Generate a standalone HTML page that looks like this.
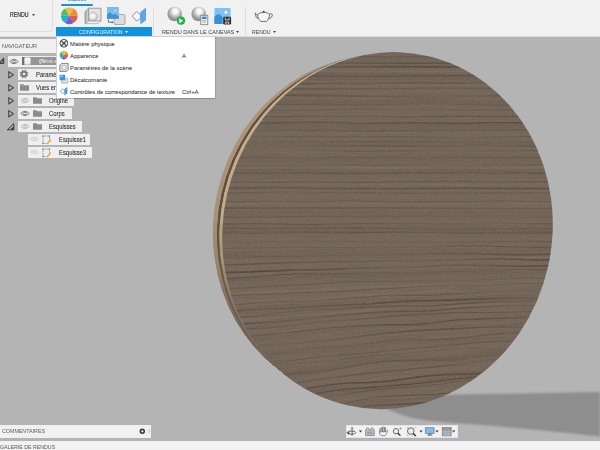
<!DOCTYPE html>
<html><head><meta charset="utf-8">
<style>
*{margin:0;padding:0;box-sizing:border-box}
html,body{width:600px;height:450px;overflow:hidden;background:#b4b4b4;font-family:"Liberation Sans",sans-serif;position:relative}
.a{position:absolute}
.t{position:absolute;white-space:nowrap;font-size:5.9px;line-height:1;color:#333;-webkit-text-stroke:.05px #333}
.u{position:absolute;white-space:nowrap;font-size:6px;line-height:1;color:#4a4a4a;transform-origin:0 0}
.row{position:absolute;background:#efefef;height:11px}
.n{position:absolute;white-space:nowrap;font-size:7px;line-height:1;color:#2c2c2c;-webkit-text-stroke:.08px currentColor;transform-origin:0 0;transform:scaleX(.84)}
</style></head><body>
<svg class="a" style="left:0;top:0" width="600" height="450" viewBox="0 0 600 450">
<defs><clipPath id="fc"><ellipse cx="387.50" cy="230.68" rx="164.50" ry="179.17" transform="rotate(12.88 387.50 230.68)" fill="#000" /></clipPath>
<clipPath id="rc"><path d="M390 40 L200 40 L200 430 L390 430 Z"/></clipPath>
<linearGradient id="rmv" x1="0" y1="290" x2="0" y2="362" gradientUnits="userSpaceOnUse"><stop offset="0" stop-color="#fff"/><stop offset="1" stop-color="#fff" stop-opacity="0"/></linearGradient>
<mask id="rm2" maskUnits="userSpaceOnUse" x="200" y="40" width="200" height="380"><rect x="200" y="40" width="200" height="380" fill="url(#rmv)"/></mask>
<linearGradient id="rmg" x1="290" y1="0" x2="375" y2="0" gradientUnits="userSpaceOnUse"><stop offset="0" stop-color="#fff"/><stop offset="1" stop-color="#fff" stop-opacity="0"/></linearGradient>
<mask id="rm" maskUnits="userSpaceOnUse" x="200" y="40" width="200" height="380"><rect x="200" y="40" width="200" height="380" fill="url(#rmg)"/></mask>
<linearGradient id="rb1" x1="0" y1="60" x2="0" y2="400" gradientUnits="userSpaceOnUse"><stop offset="0" stop-color="#8f7b64"/><stop offset=".15" stop-color="#ad9676"/><stop offset=".56" stop-color="#a99274"/><stop offset=".7" stop-color="#98846b"/><stop offset=".82" stop-color="#7c6c5b"/><stop offset="1" stop-color="#6f6253"/></linearGradient>
<linearGradient id="rb2" x1="0" y1="60" x2="0" y2="400" gradientUnits="userSpaceOnUse"><stop offset="0" stop-color="#5b4f43"/><stop offset=".53" stop-color="#5b4f43"/><stop offset=".72" stop-color="#65574a"/><stop offset="1" stop-color="#6b5e50"/></linearGradient>
<linearGradient id="rb3" x1="0" y1="60" x2="0" y2="400" gradientUnits="userSpaceOnUse"><stop offset="0" stop-color="#c9b28d"/><stop offset=".56" stop-color="#c2aa86"/><stop offset=".7" stop-color="#a89276"/><stop offset=".82" stop-color="#857464"/><stop offset="1" stop-color="#75685a"/></linearGradient>
<linearGradient id="rmg" x1="290" y1="0" x2="375" y2="0" gradientUnits="userSpaceOnUse"><stop offset="0" stop-color="#fff"/><stop offset="1" stop-color="#fff" stop-opacity="0"/></linearGradient>
<mask id="rm" maskUnits="userSpaceOnUse" x="200" y="40" width="200" height="380"><rect x="200" y="40" width="200" height="380" fill="url(#rmg)"/></mask>
<linearGradient id="rb1" x1="0" y1="60" x2="0" y2="400" gradientUnits="userSpaceOnUse"><stop offset="0" stop-color="#8f7b64"/><stop offset=".15" stop-color="#ad9676"/><stop offset=".47" stop-color="#b89f7d"/><stop offset=".64" stop-color="#9e8a70"/><stop offset=".82" stop-color="#85735f"/><stop offset="1" stop-color="#85735f"/></linearGradient>
<linearGradient id="rb2" x1="0" y1="60" x2="0" y2="400" gradientUnits="userSpaceOnUse"><stop offset="0" stop-color="#5b4f43"/><stop offset=".53" stop-color="#5b4f43"/><stop offset=".76" stop-color="#6e5e4d"/><stop offset="1" stop-color="#76654f"/></linearGradient>
<linearGradient id="rb3" x1="0" y1="60" x2="0" y2="400" gradientUnits="userSpaceOnUse"><stop offset="0" stop-color="#cfb893"/><stop offset=".6" stop-color="#c8b08c"/><stop offset=".76" stop-color="#b09878"/><stop offset=".9" stop-color="#9a8569"/><stop offset="1" stop-color="#9a8569"/></linearGradient>
<filter id="blur1" x="-10%" y="-50%" width="120%" height="200%"><feGaussianBlur stdDeviation="0.8"/></filter>
<filter id="gm" x="200" y="40" width="380" height="380" filterUnits="userSpaceOnUse" color-interpolation-filters="sRGB">
  <feTurbulence type="fractalNoise" baseFrequency="0.006 0.03" numOctaves="2" seed="9" result="n"/>
  <feColorMatrix in="n" type="matrix" values="0 0 0 0 0  0 0 0 0 0  0 0 0 0 0  1.6 0 0 0 -0.25" result="m"/>
  <feComposite in="SourceGraphic" in2="m" operator="in" result="l"/>
  <feGaussianBlur in="l" stdDeviation="0.6"/>
</filter>
<filter id="soft" x="200" y="40" width="380" height="380" filterUnits="userSpaceOnUse" color-interpolation-filters="sRGB">
  <feTurbulence type="fractalNoise" baseFrequency="0.0025 0.07" numOctaves="2" seed="21" result="n"/>
  <feColorMatrix in="n" type="matrix" values="0 0 0 0 0.29  0 0 0 0 0.24  0 0 0 0 0.19  -1.6 0 0 0 0.95" result="m"/>
  <feComposite in="m" in2="SourceAlpha" operator="in"/>
</filter>
<filter id="gm2" x="200" y="40" width="380" height="380" filterUnits="userSpaceOnUse" color-interpolation-filters="sRGB">
  <feTurbulence type="fractalNoise" baseFrequency="0.02 0.05" numOctaves="2" seed="4" result="n"/>
  <feColorMatrix in="n" type="matrix" values="0 0 0 0 0  0 0 0 0 0  0 0 0 0 0  2.2 0 0 0 -0.62" result="m"/>
  <feComposite in="SourceGraphic" in2="m" operator="in" result="l"/>
  <feGaussianBlur in="l" stdDeviation="0.35"/>
</filter>
<filter id="bblur" x="200" y="40" width="380" height="380" filterUnits="userSpaceOnUse"><feGaussianBlur stdDeviation="1.8"/></filter>
<filter id="spk" x="200" y="40" width="380" height="380" filterUnits="userSpaceOnUse" color-interpolation-filters="sRGB">
  <feTurbulence type="fractalNoise" baseFrequency="0.7" numOctaves="1" seed="2" result="s"/>
  <feColorMatrix in="s" type="matrix" values="0 0 0 0 0.62  0 0 0 0 0.56  0 0 0 0 0.5  0.9 0 0 0 -0.42" result="sp"/>
  <feComposite in="sp" in2="SourceAlpha" operator="in"/>
</filter></defs>
<path d="M384 408.5 C 400 399, 425 395.5, 455 394.6 L600 392 L600 436.5 C 560 432, 500 426, 435 421.5 C 420 420, 408 417.5, 398 413.5 C 392 411, 388 409.5, 384 408.5 Z" fill="#8e8e8e" filter="url(#blur1)"/>
<g clip-path="url(#rc)" mask="url(#rm)"><ellipse cx="371.38" cy="226.68" rx="157.76" ry="171.82" transform="rotate(12.88 371.38 226.68)" fill="url(#rb1)" /><ellipse cx="371.83" cy="226.79" rx="157.94" ry="172.03" transform="rotate(12.88 371.83 226.79)" fill="url(#rb1)" /><ellipse cx="372.28" cy="226.90" rx="158.13" ry="172.23" transform="rotate(12.88 372.28 226.90)" fill="url(#rb1)" /><ellipse cx="372.73" cy="227.01" rx="158.32" ry="172.44" transform="rotate(12.88 372.73 227.01)" fill="url(#rb1)" /><ellipse cx="373.17" cy="227.12" rx="158.50" ry="172.64" transform="rotate(12.88 373.17 227.12)" fill="url(#rb1)" /><ellipse cx="373.62" cy="227.23" rx="158.69" ry="172.84" transform="rotate(12.88 373.62 227.23)" fill="url(#rb1)" /><ellipse cx="374.07" cy="227.34" rx="158.88" ry="173.05" transform="rotate(12.88 374.07 227.34)" fill="url(#rb1)" /><ellipse cx="374.52" cy="227.46" rx="159.07" ry="173.25" transform="rotate(12.88 374.52 227.46)" fill="url(#rb1)" /><ellipse cx="374.96" cy="227.57" rx="159.25" ry="173.46" transform="rotate(12.88 374.96 227.57)" fill="url(#rb1)" /><ellipse cx="375.41" cy="227.68" rx="159.44" ry="173.66" transform="rotate(12.88 375.41 227.68)" fill="url(#rb1)" /><ellipse cx="375.86" cy="227.79" rx="159.63" ry="173.86" transform="rotate(12.88 375.86 227.79)" fill="url(#rb1)" /><ellipse cx="376.31" cy="227.90" rx="159.82" ry="174.07" transform="rotate(12.88 376.31 227.90)" fill="url(#rb1)" /><ellipse cx="376.75" cy="228.01" rx="160.00" ry="174.27" transform="rotate(12.88 376.75 228.01)" fill="url(#rb1)" /><ellipse cx="377.20" cy="228.12" rx="160.19" ry="174.48" transform="rotate(12.88 377.20 228.12)" fill="url(#rb1)" /><ellipse cx="377.65" cy="228.23" rx="160.38" ry="174.68" transform="rotate(12.88 377.65 228.23)" fill="url(#rb1)" /><ellipse cx="378.10" cy="228.35" rx="160.57" ry="174.88" transform="rotate(12.88 378.10 228.35)" fill="url(#rb1)" /><ellipse cx="378.55" cy="228.46" rx="160.75" ry="175.09" transform="rotate(12.88 378.55 228.46)" fill="url(#rb2)" /><ellipse cx="378.99" cy="228.57" rx="160.94" ry="175.29" transform="rotate(12.88 378.99 228.57)" fill="url(#rb2)" /><ellipse cx="379.44" cy="228.68" rx="161.13" ry="175.50" transform="rotate(12.88 379.44 228.68)" fill="url(#rb2)" /><ellipse cx="379.89" cy="228.79" rx="161.32" ry="175.70" transform="rotate(12.88 379.89 228.79)" fill="url(#rb2)" /><ellipse cx="380.34" cy="228.90" rx="161.50" ry="175.91" transform="rotate(12.88 380.34 228.90)" fill="url(#rb2)" /><ellipse cx="380.78" cy="229.01" rx="161.69" ry="176.11" transform="rotate(12.88 380.78 229.01)" fill="url(#rb2)" /><ellipse cx="381.23" cy="229.12" rx="161.88" ry="176.31" transform="rotate(12.88 381.23 229.12)" fill="url(#rb2)" /><ellipse cx="381.68" cy="229.23" rx="162.06" ry="176.52" transform="rotate(12.88 381.68 229.23)" fill="url(#rb2)" /><ellipse cx="382.13" cy="229.35" rx="162.25" ry="176.72" transform="rotate(12.88 382.13 229.35)" fill="url(#rb2)" /><ellipse cx="382.58" cy="229.46" rx="162.44" ry="176.93" transform="rotate(12.88 382.58 229.46)" fill="url(#rb3)" /><ellipse cx="383.02" cy="229.57" rx="162.63" ry="177.13" transform="rotate(12.88 383.02 229.57)" fill="url(#rb3)" /><ellipse cx="383.47" cy="229.68" rx="162.81" ry="177.33" transform="rotate(12.88 383.47 229.68)" fill="url(#rb3)" /><ellipse cx="383.92" cy="229.79" rx="163.00" ry="177.54" transform="rotate(12.88 383.92 229.79)" fill="url(#rb3)" /><ellipse cx="384.37" cy="229.90" rx="163.19" ry="177.74" transform="rotate(12.88 384.37 229.90)" fill="url(#rb3)" /><ellipse cx="384.81" cy="230.01" rx="163.38" ry="177.95" transform="rotate(12.88 384.81 230.01)" fill="url(#rb3)" /><ellipse cx="385.26" cy="230.12" rx="163.56" ry="178.15" transform="rotate(12.88 385.26 230.12)" fill="url(#rb3)" /><ellipse cx="385.71" cy="230.24" rx="163.75" ry="178.35" transform="rotate(12.88 385.71 230.24)" fill="url(#rb3)" /><ellipse cx="386.16" cy="230.35" rx="163.94" ry="178.56" transform="rotate(12.88 386.16 230.35)" fill="url(#rb3)" /><ellipse cx="386.60" cy="230.46" rx="164.13" ry="178.76" transform="rotate(12.88 386.60 230.46)" fill="url(#rb3)" /><ellipse cx="387.05" cy="230.57" rx="164.31" ry="178.97" transform="rotate(12.88 387.05 230.57)" fill="url(#rb3)" /></g>
<ellipse cx="387.50" cy="230.68" rx="164.50" ry="179.17" transform="rotate(12.88 387.50 230.68)" fill="#726559" />
<g clip-path="url(#fc)"><g filter="url(#gm)" stroke="#8d7f70" fill="none"><path d="M200 62.9L220 62.7L240 62.5L260 62.7L280 62.6L300 62.7L320 62.5L340 62.3L360 62.3L380 62.8L400 63.0L420 62.7L440 62.4L460 62.5L480 62.1L500 62.0L520 62.4L540 62.9L560 63.0L580 63.1" stroke-width="2.55" stroke-opacity="0.23"/><path d="M200 71.3L220 71.1L240 70.9L260 70.9L280 71.5L300 71.8L320 71.6L340 71.7L360 72.1L380 71.9L400 71.6L420 71.7L440 71.6L460 71.7L480 71.7L500 71.7L520 71.5L540 71.4L560 71.7L580 71.7" stroke-width="2.39" stroke-opacity="0.32"/><path d="M200 85.0L220 85.0L240 85.3L260 85.3L280 85.7L300 85.8L320 85.2L340 84.8L360 84.6L380 84.7L400 85.2L420 85.3L440 85.3L460 85.2L480 84.8L500 84.7L520 85.3L540 85.4L560 85.4L580 85.3" stroke-width="2.48" stroke-opacity="0.16"/><path d="M200 97.1L220 96.8L240 96.7L260 96.8L280 97.0L300 97.4L320 97.4L340 97.3L360 97.6L380 97.7L400 97.2L420 97.0L440 96.9L460 96.6L480 96.7L500 96.8L520 97.2L540 97.3L560 97.3L580 97.0" stroke-width="1.86" stroke-opacity="0.22"/><path d="M200 115.3L220 115.1L240 115.0L260 114.9L280 115.1L300 115.9L320 115.6L340 115.0L360 115.2L380 115.1L400 114.8L420 115.1L440 115.5L460 115.6L480 115.6L500 115.3L520 115.4L540 115.6L560 115.6L580 115.5" stroke-width="2.03" stroke-opacity="0.18"/><path d="M200 133.1L220 133.2L240 133.3L260 133.6L280 133.8L300 133.8L320 133.3L340 133.3L360 133.6L380 133.2L400 132.6L420 133.1L440 133.3L460 133.1L480 133.0L500 133.2L520 133.7L540 133.7L560 133.6L580 133.8" stroke-width="1.67" stroke-opacity="0.18"/><path d="M200 148.6L220 148.1L240 147.9L260 148.2L280 148.5L300 148.2L320 147.9L340 147.9L360 148.1L380 148.3L400 148.7L420 149.0L440 148.8L460 148.5L480 148.2L500 148.1L520 148.4L540 148.6L560 148.5L580 148.3" stroke-width="2.08" stroke-opacity="0.23"/><path d="M200 167.9L220 167.6L240 167.9L260 167.6L280 167.3L300 167.3L320 167.1L340 167.1L360 167.5L380 167.7L400 167.3L420 167.5L440 167.7L460 168.0L480 167.9L500 167.9L520 167.9L540 167.4L560 167.2L580 167.0" stroke-width="2.87" stroke-opacity="0.31"/><path d="M200 184.6L220 184.2L240 184.0L260 183.6L280 183.9L300 184.3L320 184.2L340 184.5L360 184.6L380 184.6L400 184.3L420 184.1L440 184.5L460 184.8L480 184.5L500 184.6L520 184.4L540 184.5L560 184.9L580 184.6" stroke-width="2.31" stroke-opacity="0.35"/><path d="M200 204.3L220 203.8L240 203.3L260 203.3L280 203.5L300 203.7L320 203.9L340 203.6L360 203.0L380 203.3L400 203.6L420 203.9L440 203.4L460 203.1L480 203.3L500 203.4L520 203.2L540 203.6L560 203.7L580 203.8" stroke-width="2.85" stroke-opacity="0.28"/><path d="M200 216.6L220 216.3L240 217.0L260 217.5L280 217.4L300 217.3L320 217.1L340 217.0L360 217.1L380 217.1L400 217.1L420 217.1L440 217.0L460 217.1L480 217.3L500 217.4L520 217.3L540 217.3L560 217.0L580 216.5" stroke-width="2.59" stroke-opacity="0.26"/><path d="M200 228.7L220 228.9L240 229.0L260 228.8L280 228.6L300 228.6L320 228.6L340 228.7L360 229.1L380 229.7L400 229.4L420 229.0L440 229.1L460 229.2L480 229.4L500 229.3L520 229.0L540 229.3L560 228.9L580 228.7" stroke-width="1.86" stroke-opacity="0.22"/><path d="M200 249.4L220 249.1L240 248.4L260 247.5L280 247.3L300 247.2L320 247.4L340 247.1L360 247.2L380 247.0L400 246.9L420 247.1L440 246.8L460 246.6L480 247.0L500 246.6L520 246.3L540 246.6L560 246.3L580 246.5" stroke-width="1.92" stroke-opacity="0.24"/><path d="M200 261.7L220 261.7L240 261.5L260 261.3L280 261.4L300 260.5L320 260.4L340 260.2L360 259.8L380 258.9L400 258.3L420 258.1L440 258.2L460 258.4L480 258.1L500 257.0L520 257.4L540 257.3L560 256.9L580 256.5" stroke-width="2.82" stroke-opacity="0.18"/><path d="M200 279.6L220 277.9L240 276.3L260 276.3L280 276.5L300 275.1L320 274.0L340 273.7L360 273.3L380 272.2L400 272.8L420 272.4L440 271.7L460 271.3L480 271.4L500 270.4L520 270.2L540 269.6L560 268.8L580 269.1" stroke-width="2.05" stroke-opacity="0.21"/><path d="M200 296.9L220 295.1L240 293.7L260 292.1L280 291.4L300 290.5L320 289.9L340 288.4L360 287.5L380 286.6L400 286.4L420 285.7L440 284.8L460 285.1L480 284.0L500 282.5L520 281.8L540 281.1L560 280.9L580 281.3" stroke-width="2.94" stroke-opacity="0.24"/><path d="M200 305.4L220 304.4L240 302.8L260 301.1L280 300.4L300 299.7L320 298.6L340 296.8L360 295.3L380 295.3L400 294.5L420 292.1L440 290.5L460 291.3L480 292.1L500 291.3L520 290.0L540 290.3L560 289.5L580 289.7" stroke-width="2.38" stroke-opacity="0.31"/><path d="M200 323.7L220 321.0L240 320.1L260 318.8L280 317.2L300 315.1L320 313.8L340 313.2L360 310.7L380 308.7L400 306.6L420 306.4L440 305.9L460 305.4L480 305.2L500 304.1L520 303.8L540 302.9L560 301.7L580 300.8" stroke-width="2.99" stroke-opacity="0.26"/><path d="M200 345.4L220 343.9L240 342.4L260 341.6L280 339.2L300 337.5L320 334.9L340 331.8L360 329.2L380 328.7L400 328.2L420 326.8L440 325.7L460 324.1L480 322.3L500 322.0L520 321.1L540 321.2L560 321.1L580 318.8" stroke-width="1.80" stroke-opacity="0.29"/><path d="M200 361.5L220 358.9L240 356.4L260 355.4L280 352.2L300 350.4L320 349.2L340 347.6L360 344.9L380 343.2L400 340.5L420 339.0L440 337.5L460 336.1L480 336.1L500 336.5L520 335.8L540 333.8L560 331.9L580 331.5" stroke-width="2.04" stroke-opacity="0.31"/><path d="M200 386.3L220 382.3L240 376.7L260 373.0L280 370.9L300 367.4L320 364.5L340 364.5L360 362.8L380 360.7L400 358.6L420 357.1L440 355.1L460 353.8L480 353.0L500 350.3L520 349.2L540 348.0L560 348.8L580 347.4" stroke-width="1.59" stroke-opacity="0.32"/><path d="M200 406.9L220 403.9L240 398.7L260 394.6L280 392.3L300 388.8L320 386.7L340 384.7L360 382.4L380 378.6L400 376.3L420 375.5L440 373.5L460 370.1L480 369.1L500 369.0L520 368.8L540 370.1L560 368.9L580 367.8" stroke-width="1.54" stroke-opacity="0.17"/><path d="M200 425.2L220 419.7L240 415.8L260 413.4L280 409.7L300 407.1L320 403.6L340 401.2L360 398.3L380 397.3L400 397.7L420 395.8L440 391.5L460 388.6L480 386.5L500 387.3L520 387.2L540 384.3L560 383.2L580 383.7" stroke-width="2.02" stroke-opacity="0.32"/><path d="M200 430.8L220 427.2L240 423.0L260 419.4L280 416.4L300 414.8L320 413.7L340 411.1L360 406.2L380 404.8L400 402.7L420 400.6L440 399.5L460 398.4L480 396.8L500 396.5L520 397.2L540 394.9L560 392.9L580 391.6" stroke-width="2.08" stroke-opacity="0.16"/><path d="M200 452.7L220 448.7L240 442.5L260 438.6L280 436.5L300 433.2L320 432.1L340 429.4L360 425.4L380 424.6L400 423.6L420 420.5L440 417.6L460 416.1L480 415.0L500 413.0L520 412.5L540 411.1L560 409.5L580 409.0" stroke-width="2.83" stroke-opacity="0.25"/></g><g filter="url(#bblur)" stroke="#4b3e32" fill="none"><path d="M200 62.5L220 63.0L240 63.7L260 62.3L280 61.8L300 62.5L320 62.0L340 62.3L360 62.6L380 62.6L400 63.2L420 63.1L440 62.8L460 62.3L480 62.2L500 62.8L520 63.6L540 63.2L560 63.2L580 63.0" stroke-width="6.42" stroke-opacity="0.08"/><path d="M200 77.5L220 77.4L240 76.2L260 76.7L280 76.8L300 76.6L320 76.3L340 77.0L360 77.1L380 76.3L400 76.5L420 76.2L440 76.9L460 77.1L480 77.5L500 77.0L520 75.8L540 75.9L560 76.8L580 77.5" stroke-width="5.00" stroke-opacity="0.17"/><path d="M200 103.1L220 103.2L240 102.8L260 102.3L280 102.2L300 102.5L320 102.2L340 102.9L360 102.8L380 102.1L400 101.6L420 101.6L440 101.6L460 101.9L480 102.7L500 103.1L520 102.2L540 102.2L560 103.0L580 102.7" stroke-width="3.91" stroke-opacity="0.16"/><path d="M200 125.6L220 125.7L240 125.7L260 126.3L280 126.4L300 126.2L320 125.9L340 126.9L360 127.3L380 127.3L400 126.2L420 126.1L440 126.4L460 126.8L480 126.6L500 126.8L520 126.4L540 126.9L560 127.0L580 126.8" stroke-width="4.18" stroke-opacity="0.11"/><path d="M200 143.0L220 143.3L240 144.2L260 143.8L280 143.8L300 143.9L320 144.2L340 144.3L360 144.8L380 144.2L400 143.4L420 143.6L440 143.3L460 143.8L480 144.3L500 143.5L520 144.1L540 144.4L560 144.8L580 144.6" stroke-width="5.71" stroke-opacity="0.08"/><path d="M200 158.1L220 157.4L240 157.6L260 157.9L280 158.6L300 159.5L320 159.0L340 158.9L360 158.8L380 158.1L400 157.9L420 159.1L440 158.5L460 158.2L480 158.5L500 158.1L520 158.3L540 158.8L560 158.5L580 158.5" stroke-width="5.01" stroke-opacity="0.15"/><path d="M200 172.5L220 171.9L240 172.2L260 172.8L280 171.9L300 171.9L320 172.6L340 172.8L360 172.6L380 172.8L400 172.9L420 172.4L440 172.0L460 172.3L480 172.0L500 172.2L520 173.0L540 172.6L560 171.5L580 171.0" stroke-width="3.98" stroke-opacity="0.16"/><path d="M200 186.6L220 186.7L240 186.5L260 185.7L280 185.7L300 185.8L320 186.1L340 186.8L360 186.3L380 185.7L400 185.0L420 185.3L440 185.8L460 185.6L480 185.2L500 185.8L520 185.9L540 186.4L560 186.4L580 186.2" stroke-width="3.64" stroke-opacity="0.09"/><path d="M200 213.6L220 214.0L240 213.8L260 213.4L280 212.7L300 212.8L320 212.8L340 212.3L360 212.8L380 213.5L400 214.0L420 214.3L440 212.9L460 213.1L480 213.4L500 213.6L520 213.3L540 213.2L560 213.5L580 213.8" stroke-width="3.62" stroke-opacity="0.14"/><path d="M200 231.0L220 230.1L240 230.4L260 230.2L280 230.0L300 230.1L320 230.3L340 229.7L360 229.7L380 230.2L400 229.4L420 229.6L440 230.2L460 230.1L480 230.3L500 231.3L520 231.2L540 230.8L560 230.7L580 230.3" stroke-width="6.99" stroke-opacity="0.14"/><path d="M200 256.1L220 255.2L240 254.5L260 254.6L280 254.2L300 253.1L320 252.9L340 253.1L360 253.9L380 253.5L400 253.0L420 253.4L440 252.9L460 252.3L480 252.3L500 252.9L520 252.0L540 250.6L560 250.9L580 250.9" stroke-width="3.86" stroke-opacity="0.15"/><path d="M200 282.4L220 281.1L240 279.7L260 279.6L280 278.3L300 276.2L320 276.4L340 276.7L360 276.7L380 276.1L400 274.9L420 273.8L440 272.6L460 272.4L480 272.3L500 273.0L520 272.9L540 271.1L560 269.9L580 271.3" stroke-width="3.66" stroke-opacity="0.17"/><path d="M200 317.3L220 313.3L240 310.4L260 309.7L280 308.1L300 307.0L320 305.3L340 305.5L360 304.7L380 303.6L400 301.8L420 300.4L440 301.2L460 301.3L480 300.4L500 298.4L520 298.0L540 297.7L560 296.8L580 296.7" stroke-width="3.54" stroke-opacity="0.10"/><path d="M200 345.6L220 343.6L240 339.7L260 338.6L280 338.9L300 334.2L320 331.1L340 330.4L360 330.0L380 329.0L400 327.1L420 325.5L440 325.8L460 326.5L480 321.3L500 321.5L520 321.7L540 319.5L560 320.4L580 319.0" stroke-width="3.17" stroke-opacity="0.14"/><path d="M200 362.9L220 361.9L240 358.3L260 356.7L280 353.4L300 351.2L320 349.6L340 348.3L360 346.5L380 343.3L400 340.0L420 338.7L440 340.5L460 339.7L480 338.3L500 335.9L520 336.2L540 336.7L560 336.2L580 334.7" stroke-width="5.50" stroke-opacity="0.14"/><path d="M200 385.1L220 382.6L240 381.7L260 378.4L280 372.7L300 371.6L320 369.5L340 364.9L360 361.0L380 360.0L400 358.2L420 358.6L440 358.5L460 357.6L480 354.1L500 352.7L520 351.7L540 351.2L560 349.3L580 348.0" stroke-width="6.18" stroke-opacity="0.16"/><path d="M200 412.6L220 409.3L240 405.4L260 401.9L280 399.5L300 395.1L320 390.7L340 390.0L360 390.3L380 388.0L400 385.7L420 382.8L440 379.0L460 376.0L480 375.1L500 375.7L520 375.2L540 374.5L560 374.3L580 375.9" stroke-width="5.43" stroke-opacity="0.15"/><path d="M200 427.7L220 422.3L240 421.1L260 416.7L280 412.0L300 411.8L320 411.6L340 405.9L360 403.3L380 401.2L400 398.9L420 399.3L440 398.6L460 396.4L480 395.2L500 392.5L520 390.5L540 388.2L560 389.2L580 386.8" stroke-width="5.67" stroke-opacity="0.09"/><path d="M200 450.1L220 446.9L240 444.8L260 440.2L280 435.3L300 431.7L320 429.5L340 426.8L360 423.0L380 421.3L400 419.4L420 415.8L440 414.3L460 414.1L480 412.5L500 413.5L520 412.6L540 410.7L560 408.5L580 407.6" stroke-width="6.22" stroke-opacity="0.09"/></g><g filter="url(#gm2)" stroke="#4b3e32" fill="none"><path d="M200 52.9L220 52.8L240 53.0L260 53.4L280 53.7L300 53.6L320 53.5L340 53.5L360 53.3L380 53.3L400 53.3L420 53.3L440 53.2L460 52.9L480 53.0L500 53.2L520 53.9L540 53.8L560 53.2L580 53.0" stroke-width="0.50" stroke-opacity="0.22"/><path d="M200 56.5L220 56.6L240 57.3L260 57.7L280 56.8L300 56.8L320 57.2L340 57.0L360 56.9L380 56.8L400 56.9L420 56.8L440 57.2L460 57.3L480 57.1L500 56.8L520 56.9L540 57.0L560 56.7L580 56.4" stroke-width="0.64" stroke-opacity="0.20"/><path d="M200 61.1L220 61.9L240 61.6L260 60.9L280 61.1L300 61.0L320 61.2L340 61.1L360 61.6L380 61.9L400 61.6L420 61.5L440 61.6L460 61.6L480 61.2L500 61.1L520 61.3L540 61.8L560 61.6L580 61.4" stroke-width="0.47" stroke-opacity="0.21"/><path d="M200 67.1L220 67.8L240 67.3L260 67.2L280 67.0L300 66.8L320 67.2L340 67.0L360 66.8L380 67.0L400 66.9L420 66.9L440 66.6L460 66.9L480 67.1L500 66.8L520 66.5L540 66.7L560 66.9L580 66.5" stroke-width="0.62" stroke-opacity="0.16"/><path d="M200 72.9L220 72.8L240 72.8L260 72.8L280 72.7L300 73.0L320 73.1L340 73.3L360 73.1L380 73.1L400 73.5L420 73.3L440 72.8L460 72.7L480 73.3L500 73.3L520 73.1L540 72.7L560 72.4L580 72.5" stroke-width="0.74" stroke-opacity="0.26"/><path d="M200 75.3L220 75.7L240 75.5L260 75.6L280 75.6L300 75.7L320 75.5L340 75.6L360 75.7L380 75.9L400 76.1L420 76.3L440 76.3L460 76.3L480 75.7L500 75.8L520 76.1L540 75.8L560 75.3L580 75.7" stroke-width="0.69" stroke-opacity="0.26"/><path d="M200 79.6L220 79.7L240 79.0L260 79.0L280 79.4L300 79.3L320 79.6L340 79.6L360 79.2L380 79.4L400 79.5L420 79.5L440 79.2L460 79.1L480 79.3L500 79.9L520 80.0L540 79.0L560 78.8L580 79.3" stroke-width="0.55" stroke-opacity="0.16"/><path d="M200 82.8L220 82.6L240 82.5L260 83.0L280 83.2L300 83.0L320 82.7L340 82.7L360 82.6L380 82.3L400 82.1L420 82.3L440 82.2L460 82.4L480 82.3L500 82.4L520 82.4L540 82.2L560 82.2L580 82.4" stroke-width="0.49" stroke-opacity="0.27"/><path d="M200 88.3L220 88.8L240 88.6L260 87.9L280 87.7L300 88.0L320 87.9L340 88.2L360 88.6L380 88.4L400 88.3L420 88.0L440 87.7L460 87.9L480 88.5L500 88.1L520 88.2L540 88.4L560 88.4L580 88.0" stroke-width="0.43" stroke-opacity="0.19"/><path d="M200 93.4L220 93.6L240 94.0L260 93.9L280 94.1L300 93.9L320 93.7L340 94.1L360 93.9L380 93.7L400 93.9L420 93.7L440 93.3L460 93.7L480 94.6L500 94.5L520 93.7L540 94.0L560 94.2L580 93.9" stroke-width="0.65" stroke-opacity="0.23"/><path d="M200 97.2L220 97.5L240 96.8L260 96.6L280 97.0L300 97.2L320 96.9L340 97.1L360 96.9L380 97.0L400 97.4L420 97.6L440 97.5L460 97.1L480 97.6L500 97.7L520 97.5L540 97.4L560 97.3L580 97.3" stroke-width="0.74" stroke-opacity="0.27"/><path d="M200 100.3L220 100.5L240 100.3L260 100.9L280 100.6L300 100.1L320 100.5L340 100.5L360 100.4L380 100.2L400 99.9L420 99.8L440 100.4L460 100.7L480 100.7L500 100.4L520 100.8L540 100.8L560 100.2L580 100.8" stroke-width="0.48" stroke-opacity="0.24"/><path d="M200 102.9L220 103.1L240 103.5L260 103.2L280 103.3L300 103.4L320 103.2L340 103.2L360 102.9L380 102.9L400 102.5L420 102.8L440 102.8L460 102.9L480 103.3L500 103.5L520 103.5L540 103.6L560 103.4L580 103.3" stroke-width="0.47" stroke-opacity="0.22"/><path d="M200 107.3L220 107.5L240 107.0L260 106.9L280 106.9L300 107.4L320 107.9L340 107.6L360 107.8L380 107.9L400 107.4L420 107.3L440 107.5L460 107.5L480 107.1L500 107.3L520 107.7L540 107.5L560 107.6L580 107.7" stroke-width="0.57" stroke-opacity="0.12"/><path d="M200 113.6L220 113.3L240 113.1L260 113.0L280 113.0L300 112.9L320 112.9L340 112.8L360 112.7L380 112.8L400 112.9L420 113.4L440 113.2L460 113.6L480 113.5L500 113.6L520 113.5L540 113.0L560 113.5L580 113.4" stroke-width="0.63" stroke-opacity="0.13"/><path d="M200 119.5L220 119.4L240 119.5L260 119.5L280 119.6L300 119.6L320 119.7L340 119.0L360 118.7L380 118.9L400 119.0L420 119.3L440 119.8L460 119.8L480 119.4L500 119.0L520 119.3L540 119.4L560 119.5L580 119.2" stroke-width="0.67" stroke-opacity="0.20"/><path d="M200 124.4L220 124.4L240 125.0L260 124.7L280 124.3L300 124.9L320 124.9L340 125.0L360 125.1L380 124.5L400 124.4L420 125.0L440 125.2L460 125.0L480 125.2L500 125.2L520 125.0L540 124.5L560 124.6L580 124.9" stroke-width="0.68" stroke-opacity="0.30"/><path d="M200 128.2L220 128.1L240 127.8L260 128.5L280 128.4L300 128.2L320 128.1L340 128.6L360 128.2L380 128.8L400 128.3L420 128.0L440 128.1L460 128.6L480 128.0L500 127.6L520 127.8L540 128.4L560 128.5L580 128.1" stroke-width="0.42" stroke-opacity="0.12"/><path d="M200 133.1L220 133.5L240 133.9L260 133.4L280 133.7L300 133.4L320 133.3L340 134.0L360 133.8L380 133.5L400 133.6L420 133.3L440 133.1L460 133.4L480 133.7L500 132.9L520 132.9L540 133.5L560 133.1L580 133.2" stroke-width="0.41" stroke-opacity="0.15"/><path d="M200 136.4L220 136.4L240 136.2L260 136.1L280 136.0L300 135.8L320 136.1L340 135.9L360 135.8L380 136.2L400 136.6L420 136.3L440 136.3L460 135.7L480 136.1L500 136.7L520 136.5L540 136.2L560 135.8L580 135.6" stroke-width="0.46" stroke-opacity="0.13"/><path d="M200 142.6L220 142.3L240 142.1L260 142.1L280 142.1L300 142.2L320 142.3L340 142.0L360 141.6L380 141.9L400 142.7L420 142.6L440 142.1L460 142.1L480 142.3L500 142.2L520 142.0L540 141.6L560 141.7L580 142.1" stroke-width="0.58" stroke-opacity="0.15"/><path d="M200 146.2L220 146.2L240 145.6L260 145.4L280 145.7L300 146.0L320 145.8L340 145.1L360 145.5L380 145.9L400 145.9L420 145.9L440 145.8L460 145.6L480 145.4L500 145.6L520 145.2L540 145.4L560 145.5L580 145.7" stroke-width="0.70" stroke-opacity="0.16"/><path d="M200 149.6L220 150.0L240 150.2L260 150.1L280 150.1L300 150.2L320 150.2L340 150.6L360 150.7L380 150.5L400 150.4L420 150.0L440 149.9L460 150.0L480 150.0L500 150.2L520 150.5L540 150.7L560 150.5L580 150.5" stroke-width="0.54" stroke-opacity="0.20"/><path d="M200 154.2L220 153.7L240 153.8L260 154.3L280 154.5L300 154.5L320 154.2L340 154.0L360 153.5L380 153.8L400 153.6L420 153.5L440 153.7L460 154.2L480 154.3L500 154.0L520 153.9L540 154.1L560 153.9L580 154.0" stroke-width="0.61" stroke-opacity="0.16"/><path d="M200 158.1L220 158.2L240 158.4L260 158.2L280 157.9L300 157.6L320 157.7L340 158.1L360 158.5L380 158.3L400 158.0L420 158.3L440 158.2L460 158.0L480 158.0L500 157.7L520 158.1L540 158.8L560 158.6L580 158.4" stroke-width="0.47" stroke-opacity="0.22"/><path d="M200 162.6L220 162.6L240 162.6L260 162.6L280 162.4L300 162.7L320 163.0L340 162.8L360 162.7L380 162.4L400 162.7L420 162.5L440 162.2L460 162.2L480 162.3L500 162.3L520 162.5L540 163.3L560 163.2L580 162.9" stroke-width="0.51" stroke-opacity="0.11"/><path d="M200 166.5L220 166.9L240 166.7L260 166.3L280 166.6L300 166.7L320 166.4L340 166.2L360 166.0L380 165.8L400 166.3L420 166.3L440 166.4L460 166.5L480 166.7L500 166.9L520 166.5L540 166.2L560 165.9L580 166.0" stroke-width="0.43" stroke-opacity="0.17"/><path d="M200 169.5L220 169.2L240 169.3L260 170.0L280 169.9L300 169.7L320 169.6L340 169.5L360 169.6L380 169.4L400 169.7L420 169.9L440 169.8L460 169.9L480 170.0L500 170.3L520 169.9L540 169.2L560 169.4L580 170.0" stroke-width="0.64" stroke-opacity="0.28"/><path d="M200 173.5L220 173.5L240 173.0L260 173.2L280 173.5L300 173.5L320 173.9L340 173.7L360 173.1L380 173.2L400 173.6L420 173.6L440 173.4L460 173.4L480 173.2L500 173.2L520 172.8L540 173.4L560 174.1L580 173.8" stroke-width="0.66" stroke-opacity="0.18"/><path d="M200 178.7L220 178.4L240 178.0L260 177.9L280 177.8L300 177.9L320 178.0L340 177.7L360 178.0L380 178.1L400 178.4L420 178.0L440 178.1L460 178.0L480 178.0L500 177.6L520 177.7L540 177.6L560 177.5L580 177.8" stroke-width="0.73" stroke-opacity="0.23"/><path d="M200 184.1L220 183.9L240 183.9L260 184.2L280 184.3L300 184.3L320 184.3L340 184.2L360 183.6L380 184.0L400 183.9L420 183.6L440 183.8L460 184.2L480 184.4L500 184.1L520 184.3L540 184.4L560 184.7L580 184.7" stroke-width="0.56" stroke-opacity="0.24"/><path d="M200 188.6L220 188.6L240 188.3L260 188.6L280 189.3L300 189.2L320 189.1L340 188.8L360 188.9L380 189.1L400 188.9L420 189.2L440 189.1L460 189.4L480 188.7L500 188.4L520 188.6L540 188.6L560 188.6L580 188.9" stroke-width="0.78" stroke-opacity="0.10"/><path d="M200 193.9L220 194.1L240 194.1L260 194.1L280 193.8L300 194.0L320 194.2L340 193.8L360 193.6L380 193.4L400 193.6L420 193.6L440 193.7L460 193.5L480 193.5L500 193.4L520 193.7L540 194.1L560 194.5L580 194.2" stroke-width="0.78" stroke-opacity="0.18"/><path d="M200 199.9L220 199.5L240 199.5L260 199.4L280 199.0L300 198.8L320 199.4L340 199.4L360 199.3L380 199.3L400 199.4L420 199.6L440 199.9L460 199.7L480 199.7L500 199.8L520 199.9L540 199.6L560 199.3L580 200.0" stroke-width="0.54" stroke-opacity="0.18"/><path d="M200 202.2L220 202.1L240 202.3L260 202.5L280 202.9L300 202.4L320 202.4L340 202.7L360 202.5L380 201.9L400 202.2L420 202.5L440 202.5L460 202.5L480 202.9L500 202.9L520 202.2L540 201.9L560 202.2L580 202.6" stroke-width="0.74" stroke-opacity="0.27"/><path d="M200 208.5L220 208.0L240 207.6L260 207.5L280 208.0L300 208.4L320 207.9L340 207.7L360 207.8L380 207.9L400 208.0L420 207.6L440 207.6L460 207.7L480 208.0L500 207.9L520 207.5L540 207.5L560 207.9L580 208.4" stroke-width="0.50" stroke-opacity="0.27"/><path d="M200 211.1L220 210.8L240 210.6L260 211.0L280 211.3L300 211.0L320 211.4L340 211.6L360 211.4L380 211.3L400 211.3L420 211.4L440 211.7L460 211.8L480 211.7L500 211.4L520 211.3L540 211.2L560 210.9L580 211.0" stroke-width="0.42" stroke-opacity="0.18"/><path d="M200 216.0L220 216.4L240 216.5L260 216.1L280 216.1L300 215.9L320 216.0L340 216.0L360 215.7L380 215.8L400 215.9L420 216.1L440 216.1L460 215.7L480 215.7L500 215.5L520 215.3L540 215.5L560 215.7L580 215.6" stroke-width="0.60" stroke-opacity="0.18"/><path d="M200 219.5L220 219.5L240 219.5L260 219.4L280 218.9L300 218.9L320 219.1L340 219.0L360 218.8L380 219.1L400 219.2L420 219.5L440 219.2L460 219.1L480 218.7L500 219.2L520 219.7L540 219.6L560 219.6L580 219.5" stroke-width="0.63" stroke-opacity="0.11"/><path d="M200 224.6L220 224.4L240 224.1L260 224.5L280 224.5L300 224.4L320 224.6L340 224.9L360 224.1L380 224.3L400 224.7L420 225.0L440 224.7L460 224.3L480 224.6L500 225.3L520 225.1L540 224.4L560 224.4L580 224.6" stroke-width="0.56" stroke-opacity="0.20"/><path d="M200 226.7L220 226.8L240 226.9L260 226.8L280 227.2L300 227.3L320 227.2L340 227.3L360 227.2L380 227.0L400 227.1L420 227.1L440 226.9L460 227.0L480 226.5L500 226.2L520 226.9L540 227.3L560 227.5L580 227.2" stroke-width="0.56" stroke-opacity="0.13"/><path d="M200 232.0L220 231.4L240 231.5L260 231.9L280 231.7L300 231.7L320 231.3L340 231.4L360 231.4L380 231.7L400 232.0L420 231.9L440 232.0L460 232.1L480 232.1L500 231.7L520 231.1L540 231.2L560 231.8L580 231.9" stroke-width="0.78" stroke-opacity="0.25"/><path d="M200 237.1L220 236.9L240 236.7L260 237.1L280 236.8L300 236.7L320 237.3L340 237.3L360 237.0L380 236.6L400 237.3L420 236.8L440 236.4L460 236.6L480 236.5L500 236.6L520 237.2L540 237.5L560 237.1L580 237.0" stroke-width="0.80" stroke-opacity="0.15"/><path d="M200 243.7L220 243.2L240 243.4L260 243.4L280 243.1L300 243.0L320 242.6L340 243.0L360 243.2L380 243.0L400 242.9L420 243.3L440 243.4L460 243.3L480 242.9L500 243.1L520 243.5L540 243.2L560 242.6L580 242.5" stroke-width="0.79" stroke-opacity="0.13"/><path d="M200 249.0L220 248.6L240 248.4L260 248.1L280 247.3L300 247.3L320 247.6L340 247.7L360 247.3L380 246.4L400 246.3L420 246.8L440 246.7L460 246.1L480 246.0L500 246.2L520 246.1L540 246.3L560 246.3L580 246.4" stroke-width="0.54" stroke-opacity="0.28"/><path d="M200 251.5L220 251.6L240 251.6L260 251.4L280 251.3L300 250.7L320 249.5L340 249.6L360 250.0L380 249.7L400 249.7L420 249.7L440 249.1L460 249.4L480 249.8L500 249.2L520 248.7L540 248.8L560 248.5L580 248.4" stroke-width="0.49" stroke-opacity="0.23"/><path d="M200 257.5L220 256.8L240 256.7L260 256.8L280 256.5L300 257.2L320 256.0L340 254.9L360 254.9L380 254.8L400 254.7L420 254.0L440 254.0L460 253.6L480 253.9L500 254.2L520 253.9L540 253.8L560 253.5L580 253.4" stroke-width="0.65" stroke-opacity="0.17"/><path d="M200 261.1L220 260.6L240 260.3L260 259.5L280 259.2L300 259.2L320 258.6L340 259.0L360 258.0L380 257.3L400 257.8L420 258.0L440 257.8L460 257.2L480 256.5L500 256.4L520 256.5L540 256.8L560 256.8L580 256.6" stroke-width="0.75" stroke-opacity="0.18"/><path d="M200 264.9L220 263.6L240 262.7L260 262.5L280 262.3L300 262.4L320 261.6L340 260.6L360 260.7L380 261.2L400 260.4L420 259.6L440 259.3L460 259.0L480 259.2L500 258.7L520 259.1L540 259.4L560 259.1L580 258.6" stroke-width="0.70" stroke-opacity="0.13"/><path d="M200 270.8L220 269.3L240 268.3L260 268.0L280 267.6L300 266.4L320 266.0L340 265.9L360 265.1L380 265.4L400 265.5L420 264.6L440 263.6L460 263.2L480 262.9L500 263.1L520 263.5L540 263.0L560 261.7L580 261.9" stroke-width="0.66" stroke-opacity="0.15"/><path d="M200 278.3L220 276.4L240 275.7L260 275.4L280 274.5L300 273.7L320 272.8L340 271.3L360 271.1L380 270.8L400 270.9L420 270.2L440 269.6L460 268.9L480 268.3L500 268.3L520 267.5L540 267.5L560 267.7L580 268.0" stroke-width="0.68" stroke-opacity="0.12"/><path d="M200 281.6L220 280.1L240 278.5L260 278.0L280 277.2L300 276.8L320 275.3L340 274.9L360 273.5L380 272.9L400 273.4L420 273.6L440 273.2L460 272.0L480 271.5L500 271.5L520 270.4L540 270.1L560 270.8L580 270.9" stroke-width="0.75" stroke-opacity="0.20"/><path d="M200 286.8L220 285.5L240 284.7L260 284.9L280 282.9L300 281.6L320 280.9L340 280.9L360 280.6L380 279.2L400 278.8L420 278.9L440 278.8L460 277.4L480 277.0L500 276.8L520 275.4L540 275.3L560 275.1L580 274.5" stroke-width="0.78" stroke-opacity="0.12"/><path d="M200 289.9L220 288.3L240 287.7L260 287.8L280 286.8L300 284.5L320 283.3L340 282.5L360 282.0L380 282.5L400 282.0L420 280.9L440 279.8L460 279.8L480 279.3L500 278.9L520 278.9L540 278.9L560 278.0L580 277.3" stroke-width="0.55" stroke-opacity="0.18"/><path d="M200 293.6L220 292.6L240 290.8L260 289.7L280 289.1L300 288.6L320 288.5L340 287.5L360 286.0L380 284.4L400 283.2L420 282.1L440 282.3L460 281.9L480 281.5L500 281.9L520 281.5L540 280.1L560 280.4L580 280.4" stroke-width="0.59" stroke-opacity="0.11"/><path d="M200 300.5L220 298.6L240 298.6L260 297.7L280 296.5L300 295.3L320 292.9L340 291.7L360 292.4L380 291.2L400 289.9L420 290.0L440 290.0L460 288.8L480 288.4L500 287.7L520 287.6L540 286.8L560 286.5L580 285.9" stroke-width="0.44" stroke-opacity="0.15"/><path d="M200 305.5L220 304.8L240 303.9L260 301.8L280 300.9L300 299.3L320 297.6L340 296.8L360 296.5L380 295.4L400 295.3L420 294.6L440 292.3L460 290.7L480 290.2L500 290.6L520 289.9L540 289.4L560 289.4L580 290.2" stroke-width="0.60" stroke-opacity="0.20"/><path d="M200 313.3L220 311.0L240 309.3L260 307.6L280 305.2L300 304.5L320 304.0L340 302.7L360 301.2L380 299.0L400 298.9L420 299.3L440 299.5L460 298.0L480 296.6L500 295.7L520 295.5L540 295.2L560 295.4L580 294.8" stroke-width="0.77" stroke-opacity="0.21"/><path d="M200 315.4L220 314.8L240 313.6L260 312.9L280 309.3L300 306.8L320 305.3L340 305.0L360 303.8L380 302.8L400 301.8L420 301.6L440 300.3L460 299.8L480 299.0L500 297.9L520 298.0L540 297.9L560 297.3L580 295.9" stroke-width="0.59" stroke-opacity="0.21"/><path d="M200 322.4L220 320.9L240 318.6L260 316.9L280 316.0L300 313.3L320 311.8L340 310.3L360 309.1L380 308.1L400 306.4L420 306.2L440 305.3L460 303.8L480 302.3L500 301.4L520 302.5L540 303.2L560 301.1L580 299.9" stroke-width="0.50" stroke-opacity="0.27"/><path d="M200 326.3L220 324.6L240 323.8L260 321.9L280 319.4L300 317.0L320 315.9L340 314.5L360 313.2L380 311.3L400 309.2L420 308.1L440 308.1L460 307.9L480 306.6L500 305.4L520 305.2L540 305.1L560 304.1L580 303.6" stroke-width="0.45" stroke-opacity="0.16"/><path d="M200 330.8L220 327.9L240 324.3L260 322.6L280 321.9L300 320.8L320 318.8L340 316.0L360 315.1L380 315.0L400 314.4L420 312.6L440 310.4L460 309.7L480 309.2L500 308.8L520 309.1L540 309.0L560 308.2L580 306.3" stroke-width="0.50" stroke-opacity="0.23"/><path d="M200 333.9L220 331.5L240 329.5L260 326.2L280 323.5L300 322.9L320 320.8L340 319.6L360 318.9L380 316.6L400 316.1L420 316.6L440 315.9L460 313.2L480 312.2L500 311.6L520 311.7L540 310.9L560 310.7L580 309.4" stroke-width="0.72" stroke-opacity="0.22"/><path d="M200 339.7L220 338.9L240 337.0L260 333.8L280 330.0L300 327.6L320 327.2L340 326.6L360 325.3L380 323.0L400 322.1L420 320.5L440 319.4L460 317.9L480 316.8L500 316.0L520 315.4L540 314.4L560 314.1L580 314.1" stroke-width="0.58" stroke-opacity="0.18"/><path d="M200 343.5L220 341.6L240 339.0L260 338.5L280 336.9L300 333.9L320 331.8L340 330.6L360 329.0L380 326.6L400 325.5L420 325.5L440 323.6L460 321.6L480 319.6L500 317.9L520 318.6L540 318.8L560 318.3L580 318.1" stroke-width="0.41" stroke-opacity="0.20"/><path d="M200 349.2L220 345.3L240 342.8L260 341.0L280 339.2L300 338.2L320 336.4L340 334.6L360 333.0L380 330.8L400 327.6L420 326.0L440 325.5L460 325.5L480 325.0L500 325.1L520 324.3L540 323.2L560 321.5L580 321.3" stroke-width="0.80" stroke-opacity="0.20"/><path d="M200 353.5L220 351.0L240 348.7L260 344.7L280 343.0L300 342.6L320 339.9L340 336.0L360 333.7L380 333.3L400 332.5L420 331.2L440 329.6L460 328.3L480 326.8L500 326.0L520 324.6L540 323.6L560 323.9L580 323.1" stroke-width="0.74" stroke-opacity="0.19"/><path d="M200 357.6L220 356.3L240 353.5L260 350.4L280 346.3L300 342.9L320 342.5L340 340.1L360 337.9L380 337.8L400 336.5L420 334.0L440 333.2L460 332.6L480 331.2L500 330.2L520 330.6L540 329.4L560 329.2L580 328.0" stroke-width="0.41" stroke-opacity="0.25"/><path d="M200 361.6L220 358.9L240 356.1L260 353.7L280 351.0L300 349.4L320 348.6L340 348.1L360 344.2L380 341.4L400 339.5L420 338.0L440 337.5L460 335.8L480 336.3L500 333.1L520 333.0L540 334.0L560 333.5L580 332.1" stroke-width="0.60" stroke-opacity="0.10"/><path d="M200 366.9L220 363.9L240 360.7L260 357.3L280 354.0L300 352.9L320 352.3L340 351.4L360 349.5L380 346.5L400 344.9L420 342.5L440 340.1L460 339.4L480 339.6L500 338.1L520 335.7L540 335.9L560 335.6L580 335.6" stroke-width="0.45" stroke-opacity="0.18"/><path d="M200 372.6L220 371.0L240 367.1L260 363.7L280 360.9L300 359.4L320 357.8L340 356.5L360 354.0L380 350.6L400 347.8L420 346.1L440 344.4L460 343.3L480 342.4L500 342.1L520 341.0L540 339.7L560 338.9L580 337.0" stroke-width="0.71" stroke-opacity="0.22"/><path d="M200 375.6L220 372.8L240 370.7L260 366.7L280 363.8L300 362.8L320 359.4L340 356.6L360 355.9L380 353.4L400 351.1L420 349.8L440 349.8L460 349.1L480 347.7L500 346.0L520 346.6L540 343.5L560 341.5L580 341.0" stroke-width="0.42" stroke-opacity="0.18"/><path d="M200 382.9L220 378.4L240 374.4L260 371.2L280 368.6L300 366.9L320 365.6L340 362.6L360 361.4L380 360.0L400 357.9L420 355.2L440 351.2L460 351.2L480 350.9L500 351.2L520 349.5L540 347.7L560 347.2L580 347.7" stroke-width="0.66" stroke-opacity="0.14"/><path d="M200 387.0L220 384.3L240 381.5L260 379.1L280 375.6L300 371.8L320 370.7L340 369.7L360 365.8L380 361.5L400 360.2L420 360.4L440 358.6L460 355.2L480 356.0L500 356.5L520 354.4L540 350.8L560 351.1L580 352.4" stroke-width="0.78" stroke-opacity="0.21"/><path d="M200 394.2L220 389.8L240 386.1L260 382.7L280 380.2L300 378.4L320 377.5L340 375.1L360 372.5L380 368.4L400 366.4L420 363.8L440 361.5L460 361.0L480 359.6L500 359.8L520 360.0L540 357.5L560 355.6L580 354.2" stroke-width="0.43" stroke-opacity="0.23"/><path d="M200 400.5L220 396.3L240 393.5L260 387.2L280 384.6L300 382.7L320 380.2L340 376.6L360 375.0L380 373.6L400 371.5L420 367.5L440 365.9L460 365.3L480 365.7L500 365.8L520 364.1L540 361.2L560 360.3L580 359.7" stroke-width="0.76" stroke-opacity="0.25"/><path d="M200 405.4L220 402.2L240 400.6L260 396.2L280 392.7L300 388.4L320 385.6L340 384.7L360 379.9L380 376.1L400 374.8L420 374.6L440 373.8L460 371.0L480 369.2L500 368.7L520 367.8L540 365.8L560 365.3L580 364.7" stroke-width="0.73" stroke-opacity="0.14"/><path d="M200 408.6L220 404.1L240 399.7L260 396.0L280 394.5L300 392.1L320 390.4L340 387.0L360 382.9L380 381.0L400 378.7L420 375.9L440 373.2L460 373.2L480 371.8L500 369.4L520 369.8L540 369.0L560 366.2L580 365.6" stroke-width="0.55" stroke-opacity="0.29"/><path d="M200 412.6L220 408.6L240 404.1L260 400.8L280 398.7L300 397.4L320 394.4L340 391.7L360 388.6L380 386.4L400 384.3L420 381.2L440 378.8L460 377.9L480 376.0L500 374.2L520 372.5L540 371.4L560 371.7L580 370.6" stroke-width="0.55" stroke-opacity="0.29"/><path d="M200 413.9L220 410.4L240 404.9L260 402.4L280 401.3L300 398.0L320 396.0L340 394.8L360 392.2L380 387.2L400 384.3L420 382.5L440 381.2L460 379.9L480 377.4L500 377.7L520 377.6L540 377.1L560 374.5L580 374.7" stroke-width="0.69" stroke-opacity="0.19"/><path d="M200 416.5L220 411.6L240 410.9L260 408.0L280 404.1L300 401.7L320 399.0L340 397.4L360 395.6L380 391.2L400 386.4L420 387.9L440 386.8L460 384.8L480 382.1L500 380.9L520 380.4L540 380.6L560 380.2L580 379.3" stroke-width="0.43" stroke-opacity="0.11"/><path d="M200 420.4L220 419.4L240 415.9L260 412.3L280 409.0L300 405.5L320 402.3L340 400.0L360 397.5L380 396.5L400 395.9L420 393.9L440 389.8L460 387.5L480 385.6L500 383.7L520 383.1L540 383.6L560 384.2L580 383.6" stroke-width="0.49" stroke-opacity="0.21"/><path d="M200 426.0L220 422.7L240 419.7L260 416.8L280 411.5L300 408.4L320 406.4L340 402.9L360 399.2L380 400.4L400 398.9L420 393.3L440 391.7L460 392.4L480 389.3L500 388.8L520 388.1L540 387.0L560 386.4L580 384.1" stroke-width="0.52" stroke-opacity="0.19"/><path d="M200 428.0L220 424.5L240 422.4L260 418.0L280 414.2L300 412.4L320 412.0L340 409.8L360 406.5L380 403.4L400 399.4L420 397.9L440 397.1L460 394.6L480 392.6L500 392.4L520 393.2L540 392.7L560 390.6L580 390.6" stroke-width="0.48" stroke-opacity="0.21"/><path d="M200 435.9L220 432.4L240 425.8L260 421.4L280 419.4L300 416.9L320 414.7L340 413.9L360 410.5L380 406.2L400 404.4L420 403.2L440 400.6L460 399.7L480 397.7L500 397.2L520 396.1L540 393.7L560 393.5L580 393.7" stroke-width="0.72" stroke-opacity="0.21"/><path d="M200 434.6L220 431.7L240 429.2L260 425.6L280 422.2L300 420.6L320 418.9L340 415.6L360 413.9L380 412.6L400 409.0L420 406.8L440 403.5L460 402.0L480 401.9L500 401.8L520 400.1L540 398.7L560 399.1L580 399.7" stroke-width="0.42" stroke-opacity="0.27"/><path d="M200 441.9L220 440.4L240 437.6L260 434.1L280 429.1L300 425.0L320 423.2L340 423.3L360 419.9L380 415.7L400 413.8L420 412.4L440 411.0L460 408.1L480 405.5L500 405.2L520 405.4L540 404.3L560 402.7L580 402.1" stroke-width="0.48" stroke-opacity="0.23"/><path d="M200 446.3L220 442.1L240 440.3L260 435.6L280 432.1L300 430.3L320 426.3L340 423.8L360 422.4L380 420.0L400 415.5L420 412.7L440 410.7L460 411.9L480 411.6L500 410.5L520 408.8L540 407.2L560 406.8L580 404.8" stroke-width="0.60" stroke-opacity="0.24"/><path d="M200 448.5L220 445.7L240 441.8L260 438.9L280 435.2L300 432.8L320 431.7L340 430.1L360 426.1L380 425.1L400 423.6L420 419.4L440 418.6L460 416.2L480 415.1L500 414.1L520 412.9L540 414.4L560 413.6L580 411.0" stroke-width="0.64" stroke-opacity="0.16"/></g><g filter="url(#gm)" stroke="#4b3e32" fill="none"><path d="M200 51.7L210 51.7L220 51.7L230 51.9L240 52.1L250 52.2L260 52.3L270 52.4L280 52.4L290 52.4L300 52.3L310 52.3L320 52.4L330 52.4L340 52.3L350 52.2L360 52.1L370 52.1L380 52.1L390 52.1L400 52.1L410 52.0L420 51.8L430 51.6L440 51.5L450 51.5L460 51.5L470 51.6L480 51.7L490 51.8L500 51.9L510 52.0L520 52.2L530 52.4L540 52.5L550 52.4L560 52.3L570 52.2L580 52.1" stroke-width="1.09" stroke-opacity="0.78"/><path d="M200 57.0L210 57.2L220 57.3L230 57.4L240 57.3L250 57.1L260 56.9L270 56.7L280 56.7L290 56.6L300 56.6L310 56.6L320 56.6L330 56.6L340 56.6L350 56.6L360 56.7L370 56.8L380 57.0L390 57.1L400 57.1L410 57.1L420 57.0L430 57.0L440 57.0L450 57.0L460 57.0L470 57.2L480 57.4L490 57.6L500 57.7L510 57.6L520 57.3L530 57.0L540 56.7L550 56.6L560 56.6L570 56.7L580 56.7" stroke-width="0.99" stroke-opacity="0.60"/><path d="M200 62.9L210 62.9L220 63.0L230 63.1L240 63.1L250 63.1L260 63.0L270 62.9L280 62.8L290 62.7L300 62.7L310 62.7L320 62.7L330 62.8L340 62.9L350 63.0L360 63.1L370 63.2L380 63.3L390 63.3L400 63.2L410 63.2L420 63.1L430 63.2L440 63.3L450 63.4L460 63.5L470 63.6L480 63.5L490 63.5L500 63.4L510 63.4L520 63.5L530 63.6L540 63.7L550 63.7L560 63.7L570 63.5L580 63.4" stroke-width="1.61" stroke-opacity="0.62"/><path d="M200 67.1L210 67.1L220 67.0L230 67.0L240 66.9L250 66.9L260 66.7L270 66.6L280 66.5L290 66.5L300 66.6L310 66.8L320 67.0L330 67.0L340 67.0L350 66.9L360 66.8L370 66.8L380 66.7L390 66.6L400 66.6L410 66.7L420 66.7L430 66.9L440 66.9L450 67.0L460 67.0L470 67.0L480 67.0L490 67.1L500 67.2L510 67.2L520 67.2L530 67.2L540 67.3L550 67.4L560 67.6L570 67.7L580 67.7" stroke-width="1.63" stroke-opacity="0.76"/><path d="M200 76.6L210 76.5L220 76.4L230 76.3L240 76.3L250 76.3L260 76.3L270 76.4L280 76.5L290 76.4L300 76.4L310 76.2L320 76.1L330 76.1L340 76.2L350 76.4L360 76.5L370 76.5L380 76.5L390 76.3L400 76.0L410 75.8L420 75.7L430 75.6L440 75.6L450 75.6L460 75.6L470 75.6L480 75.7L490 75.9L500 76.1L510 76.3L520 76.4L530 76.4L540 76.2L550 76.1L560 76.1L570 76.1L580 76.2" stroke-width="1.13" stroke-opacity="0.73"/><path d="M200 83.5L210 83.6L220 83.7L230 83.8L240 83.8L250 83.8L260 83.7L270 83.7L280 83.8L290 83.9L300 84.0L310 83.9L320 83.8L330 83.7L340 83.6L350 83.6L360 83.6L370 83.6L380 83.4L390 83.2L400 83.0L410 82.9L420 82.9L430 83.0L440 83.1L450 83.1L460 83.1L470 83.2L480 83.3L490 83.4L500 83.6L510 83.7L520 83.8L530 83.9L540 83.8L550 83.8L560 83.7L570 83.6L580 83.6" stroke-width="1.65" stroke-opacity="0.47"/><path d="M200 89.2L210 89.1L220 89.0L230 89.0L240 89.0L250 88.9L260 88.9L270 88.8L280 88.8L290 88.8L300 88.8L310 88.8L320 88.8L330 88.8L340 88.8L350 88.9L360 88.9L370 88.9L380 88.9L390 88.8L400 88.7L410 88.6L420 88.4L430 88.3L440 88.3L450 88.3L460 88.3L470 88.4L480 88.4L490 88.4L500 88.3L510 88.3L520 88.2L530 88.2L540 88.2L550 88.3L560 88.3L570 88.4L580 88.5" stroke-width="1.74" stroke-opacity="0.42"/><path d="M200 95.4L210 95.4L220 95.4L230 95.5L240 95.5L250 95.5L260 95.5L270 95.5L280 95.4L290 95.4L300 95.4L310 95.4L320 95.5L330 95.6L340 95.8L350 96.0L360 96.2L370 96.3L380 96.4L390 96.3L400 96.3L410 96.2L420 96.0L430 96.0L440 95.9L450 96.0L460 96.0L470 96.1L480 96.1L490 96.1L500 96.0L510 95.9L520 95.8L530 95.8L540 95.7L550 95.8L560 95.8L570 95.9L580 95.9" stroke-width="1.77" stroke-opacity="0.63"/><path d="M200 105.0L210 105.0L220 105.0L230 105.0L240 105.0L250 104.9L260 104.9L270 104.8L280 104.7L290 104.5L300 104.5L310 104.5L320 104.6L330 104.8L340 104.9L350 105.0L360 105.0L370 105.0L380 104.9L390 104.7L400 104.4L410 104.1L420 104.0L430 104.0L440 104.2L450 104.5L460 104.6L470 104.7L480 104.8L490 104.9L500 105.0L510 105.0L520 105.0L530 105.0L540 105.1L550 105.1L560 105.1L570 105.0L580 104.8" stroke-width="0.94" stroke-opacity="0.61"/><path d="M200 109.7L210 109.6L220 109.5L230 109.6L240 109.7L250 109.8L260 110.1L270 110.3L280 110.4L290 110.5L300 110.4L310 110.2L320 109.9L330 109.7L340 109.4L350 109.3L360 109.3L370 109.3L380 109.4L390 109.6L400 109.7L410 109.7L420 109.8L430 109.8L440 109.9L450 110.0L460 110.1L470 110.1L480 110.0L490 110.0L500 109.9L510 109.8L520 109.8L530 109.6L540 109.6L550 109.5L560 109.5L570 109.6L580 109.6" stroke-width="1.17" stroke-opacity="0.44"/><path d="M200 116.8L210 117.0L220 117.2L230 117.2L240 117.2L250 117.1L260 116.9L270 116.8L280 116.7L290 116.6L300 116.4L310 116.3L320 116.3L330 116.3L340 116.3L350 116.3L360 116.3L370 116.4L380 116.5L390 116.6L400 116.6L410 116.6L420 116.5L430 116.5L440 116.4L450 116.3L460 116.3L470 116.3L480 116.4L490 116.5L500 116.5L510 116.4L520 116.3L530 116.2L540 116.2L550 116.1L560 116.1L570 116.1L580 116.2" stroke-width="1.59" stroke-opacity="0.58"/><path d="M200 123.0L210 123.0L220 122.9L230 122.9L240 122.9L250 122.9L260 122.9L270 122.8L280 122.6L290 122.4L300 122.2L310 122.1L320 122.2L330 122.4L340 122.8L350 123.1L360 123.3L370 123.3L380 123.2L390 123.0L400 122.7L410 122.6L420 122.7L430 122.9L440 123.1L450 123.3L460 123.3L470 123.1L480 122.9L490 122.6L500 122.6L510 122.6L520 122.8L530 122.8L540 122.8L550 122.6L560 122.5L570 122.5L580 122.5" stroke-width="1.36" stroke-opacity="0.77"/><path d="M200 130.7L210 130.8L220 130.8L230 130.8L240 130.7L250 130.6L260 130.5L270 130.4L280 130.3L290 130.3L300 130.3L310 130.4L320 130.5L330 130.6L340 130.8L350 131.0L360 131.1L370 131.1L380 131.1L390 130.9L400 130.8L410 130.7L420 130.5L430 130.4L440 130.3L450 130.2L460 130.2L470 130.2L480 130.3L490 130.4L500 130.3L510 130.2L520 130.1L530 130.0L540 130.1L550 130.1L560 130.3L570 130.4L580 130.6" stroke-width="1.55" stroke-opacity="0.45"/><path d="M200 137.1L210 137.0L220 137.0L230 136.9L240 136.9L250 136.9L260 136.9L270 136.8L280 136.8L290 136.8L300 136.8L310 136.9L320 136.9L330 136.9L340 136.8L350 136.7L360 136.6L370 136.6L380 136.6L390 136.7L400 136.9L410 137.1L420 137.3L430 137.4L440 137.5L450 137.6L460 137.6L470 137.6L480 137.6L490 137.5L500 137.3L510 137.1L520 136.9L530 136.7L540 136.7L550 136.7L560 136.8L570 136.9L580 137.0" stroke-width="1.45" stroke-opacity="0.57"/><path d="M200 142.2L210 142.4L220 142.5L230 142.5L240 142.5L250 142.4L260 142.3L270 142.2L280 142.1L290 142.1L300 142.1L310 142.0L320 142.0L330 141.9L340 141.9L350 141.9L360 141.8L370 141.7L380 141.6L390 141.4L400 141.4L410 141.5L420 141.6L430 141.8L440 142.0L450 142.1L460 142.3L470 142.3L480 142.3L490 142.3L500 142.3L510 142.3L520 142.3L530 142.3L540 142.2L550 142.2L560 142.0L570 141.9L580 141.8" stroke-width="1.18" stroke-opacity="0.80"/><path d="M200 145.2L210 145.2L220 145.3L230 145.5L240 145.6L250 145.6L260 145.6L270 145.6L280 145.6L290 145.8L300 145.9L310 146.1L320 146.1L330 146.0L340 145.9L350 145.8L360 145.7L370 145.7L380 145.8L390 145.8L400 145.9L410 145.9L420 145.9L430 145.9L440 145.9L450 145.7L460 145.6L470 145.4L480 145.3L490 145.3L500 145.5L510 145.7L520 145.9L530 146.1L540 146.2L550 146.3L560 146.3L570 146.3L580 146.2" stroke-width="1.46" stroke-opacity="0.79"/><path d="M200 150.7L210 150.9L220 151.0L230 151.0L240 150.9L250 150.6L260 150.4L270 150.3L280 150.2L290 150.3L300 150.3L310 150.5L320 150.7L330 150.8L340 151.0L350 151.1L360 151.2L370 151.2L380 151.1L390 151.1L400 151.0L410 150.9L420 150.8L430 150.8L440 150.8L450 150.8L460 150.9L470 151.0L480 151.0L490 151.0L500 150.9L510 150.7L520 150.6L530 150.5L540 150.4L550 150.3L560 150.3L570 150.2L580 150.3" stroke-width="1.22" stroke-opacity="0.66"/><path d="M200 156.6L210 156.8L220 157.0L230 157.2L240 157.2L250 157.2L260 157.2L270 157.3L280 157.5L290 157.7L300 157.9L310 157.8L320 157.6L330 157.3L340 157.1L350 157.1L360 157.1L370 157.2L380 157.2L390 157.2L400 157.1L410 156.9L420 156.8L430 156.8L440 156.8L450 157.0L460 157.3L470 157.5L480 157.5L490 157.5L500 157.4L510 157.3L520 157.2L530 157.3L540 157.4L550 157.6L560 157.7L570 157.7L580 157.6" stroke-width="1.02" stroke-opacity="0.47"/><path d="M200 165.8L210 165.7L220 165.7L230 165.6L240 165.6L250 165.5L260 165.5L270 165.5L280 165.5L290 165.4L300 165.4L310 165.3L320 165.2L330 165.1L340 165.1L350 165.1L360 165.2L370 165.3L380 165.3L390 165.2L400 165.1L410 165.0L420 165.0L430 165.0L440 165.0L450 165.0L460 165.0L470 165.0L480 164.9L490 164.9L500 164.9L510 164.9L520 164.8L530 164.8L540 164.8L550 164.7L560 164.7L570 164.8L580 164.8" stroke-width="1.20" stroke-opacity="0.41"/><path d="M200 172.6L210 172.5L220 172.5L230 172.7L240 172.8L250 173.0L260 173.1L270 173.1L280 173.0L290 172.9L300 172.9L310 172.9L320 173.0L330 173.2L340 173.3L350 173.5L360 173.6L370 173.5L380 173.4L390 173.1L400 172.9L410 172.7L420 172.7L430 172.7L440 172.8L450 172.8L460 172.9L470 172.9L480 173.0L490 173.0L500 173.0L510 173.0L520 173.0L530 173.0L540 173.2L550 173.4L560 173.6L570 173.6L580 173.5" stroke-width="1.20" stroke-opacity="0.43"/><path d="M200 181.7L210 181.8L220 182.0L230 182.1L240 182.2L250 182.3L260 182.4L270 182.4L280 182.3L290 182.2L300 182.1L310 182.0L320 182.0L330 182.2L340 182.3L350 182.4L360 182.3L370 182.1L380 182.0L390 181.9L400 181.8L410 181.7L420 181.6L430 181.4L440 181.3L450 181.3L460 181.4L470 181.5L480 181.6L490 181.8L500 181.9L510 182.0L520 182.1L530 182.0L540 182.0L550 181.9L560 181.8L570 181.8L580 181.7" stroke-width="0.99" stroke-opacity="0.53"/><path d="M200 188.0L210 188.0L220 188.0L230 188.1L240 188.0L250 187.9L260 187.8L270 187.7L280 187.7L290 187.8L300 188.0L310 188.2L320 188.4L330 188.6L340 188.6L350 188.6L360 188.6L370 188.6L380 188.7L390 188.7L400 188.7L410 188.6L420 188.6L430 188.5L440 188.4L450 188.3L460 188.3L470 188.3L480 188.5L490 188.6L500 188.6L510 188.6L520 188.6L530 188.5L540 188.5L550 188.6L560 188.6L570 188.6L580 188.5" stroke-width="1.53" stroke-opacity="0.55"/><path d="M200 192.5L210 192.5L220 192.6L230 192.7L240 192.7L250 192.6L260 192.5L270 192.3L280 192.1L290 192.0L300 192.1L310 192.2L320 192.4L330 192.5L340 192.6L350 192.7L360 192.7L370 192.8L380 192.9L390 193.0L400 193.1L410 193.1L420 193.1L430 193.0L440 193.0L450 193.1L460 193.1L470 193.1L480 193.1L490 193.0L500 192.9L510 192.8L520 192.8L530 192.8L540 192.8L550 192.7L560 192.7L570 192.7L580 192.7" stroke-width="0.92" stroke-opacity="0.40"/><path d="M200 201.3L210 201.5L220 201.6L230 201.7L240 201.7L250 201.6L260 201.4L270 201.3L280 201.4L290 201.5L300 201.5L310 201.4L320 201.2L330 200.9L340 200.8L350 200.8L360 200.9L370 201.2L380 201.5L390 201.8L400 202.0L410 202.0L420 201.8L430 201.6L440 201.4L450 201.3L460 201.4L470 201.4L480 201.4L490 201.3L500 201.2L510 201.3L520 201.3L530 201.5L540 201.6L550 201.7L560 201.8L570 201.9L580 202.1" stroke-width="1.05" stroke-opacity="0.53"/><path d="M200 208.4L210 208.3L220 208.2L230 208.1L240 208.1L250 208.1L260 208.1L270 208.1L280 208.0L290 207.9L300 207.9L310 207.9L320 208.0L330 208.0L340 208.0L350 207.9L360 207.9L370 207.9L380 207.9L390 208.0L400 208.0L410 208.1L420 208.2L430 208.2L440 208.3L450 208.4L460 208.5L470 208.6L480 208.6L490 208.6L500 208.6L510 208.6L520 208.6L530 208.6L540 208.7L550 208.7L560 208.8L570 208.8L580 208.7" stroke-width="1.28" stroke-opacity="0.59"/><path d="M200 217.0L210 217.1L220 217.2L230 217.3L240 217.3L250 217.3L260 217.3L270 217.2L280 217.1L290 216.9L300 216.7L310 216.5L320 216.5L330 216.6L340 216.7L350 216.9L360 216.9L370 216.9L380 216.9L390 216.8L400 216.7L410 216.6L420 216.5L430 216.6L440 216.7L450 216.8L460 216.9L470 217.0L480 217.0L490 217.2L500 217.3L510 217.5L520 217.5L530 217.5L540 217.4L550 217.3L560 217.3L570 217.2L580 217.1" stroke-width="1.64" stroke-opacity="0.47"/><path d="M200 223.8L210 223.9L220 223.9L230 223.9L240 223.8L250 223.8L260 223.8L270 223.9L280 224.1L290 224.3L300 224.4L310 224.4L320 224.3L330 224.1L340 223.9L350 223.8L360 223.6L370 223.5L380 223.5L390 223.5L400 223.5L410 223.6L420 223.6L430 223.6L440 223.6L450 223.6L460 223.5L470 223.4L480 223.4L490 223.3L500 223.3L510 223.4L520 223.5L530 223.6L540 223.8L550 224.0L560 224.1L570 224.1L580 224.1" stroke-width="1.04" stroke-opacity="0.60"/><path d="M200 228.3L210 228.3L220 228.3L230 228.4L240 228.5L250 228.5L260 228.5L270 228.5L280 228.5L290 228.5L300 228.5L310 228.5L320 228.4L330 228.3L340 228.2L350 228.1L360 228.1L370 228.2L380 228.4L390 228.5L400 228.7L410 228.8L420 229.0L430 229.1L440 229.2L450 229.2L460 229.2L470 229.1L480 229.0L490 228.8L500 228.7L510 228.6L520 228.6L530 228.6L540 228.7L550 228.6L560 228.6L570 228.5L580 228.4" stroke-width="1.14" stroke-opacity="0.61"/><path d="M200 232.8L210 232.9L220 232.9L230 233.1L240 233.3L250 233.4L260 233.4L270 233.2L280 232.9L290 232.7L300 232.5L310 232.6L320 232.7L330 232.8L340 232.8L350 232.7L360 232.6L370 232.5L380 232.4L390 232.3L400 232.3L410 232.3L420 232.4L430 232.6L440 232.9L450 233.1L460 233.2L470 233.2L480 233.0L490 233.0L500 232.9L510 232.9L520 233.0L530 233.0L540 233.1L550 233.1L560 233.1L570 233.0L580 233.0" stroke-width="1.01" stroke-opacity="0.75"/><path d="M200 241.9L210 241.7L220 241.5L230 241.3L240 241.2L250 241.3L260 241.4L270 241.4L280 241.4L290 241.4L300 241.3L310 241.3L320 241.2L330 241.2L340 241.3L350 241.4L360 241.5L370 241.6L380 241.7L390 241.8L400 241.8L410 241.9L420 241.9L430 242.0L440 242.0L450 241.9L460 241.8L470 241.7L480 241.6L490 241.5L500 241.4L510 241.4L520 241.4L530 241.4L540 241.4L550 241.5L560 241.6L570 241.7L580 241.8" stroke-width="1.07" stroke-opacity="0.48"/><path d="M200 248.8L210 248.6L220 248.5L230 248.4L240 248.2L250 248.0L260 247.8L270 247.6L280 247.6L290 247.5L300 247.5L310 247.5L320 247.5L330 247.5L340 247.5L350 247.5L360 247.6L370 247.7L380 247.7L390 247.7L400 247.5L410 247.4L420 247.2L430 247.0L440 246.7L450 246.4L460 246.2L470 246.1L480 246.2L490 246.4L500 246.6L510 246.8L520 247.0L530 247.1L540 247.1L550 247.1L560 247.0L570 246.9L580 246.7" stroke-width="1.16" stroke-opacity="0.67"/><path d="M200 258.3L210 258.1L220 257.9L230 257.7L240 257.5L250 257.3L260 257.0L270 256.8L280 256.6L290 256.5L300 256.3L310 256.1L320 256.0L330 255.8L340 255.7L350 255.6L360 255.5L370 255.3L380 255.1L390 254.9L400 254.8L410 254.5L420 254.2L430 253.9L440 253.7L450 253.6L460 253.7L470 253.8L480 254.1L490 254.3L500 254.5L510 254.7L520 254.7L530 254.7L540 254.5L550 254.2L560 253.9L570 253.6L580 253.3" stroke-width="1.46" stroke-opacity="0.72"/><path d="M200 265.3L210 265.1L220 265.0L230 264.8L240 264.6L250 264.2L260 263.7L270 263.3L280 262.9L290 262.5L300 262.2L310 261.9L320 261.6L330 261.5L340 261.4L350 261.4L360 261.4L370 261.3L380 261.2L390 261.1L400 261.1L410 261.0L420 260.9L430 260.6L440 260.3L450 260.1L460 259.7L470 259.3L480 258.9L490 258.7L500 258.8L510 259.1L520 259.5L530 259.8L540 259.9L550 259.8L560 259.6L570 259.4L580 259.3" stroke-width="1.51" stroke-opacity="0.84"/><path d="M200 273.0L210 272.8L220 272.6L230 272.4L240 272.2L250 271.8L260 271.4L270 271.0L280 270.6L290 270.2L300 270.0L310 269.8L320 269.6L330 269.3L340 268.9L350 268.5L360 268.1L370 267.8L380 267.6L390 267.5L400 267.4L410 267.2L420 266.9L430 266.3L440 265.7L450 265.3L460 265.1L470 265.2L480 265.3L490 265.5L500 265.8L510 266.0L520 266.2L530 266.2L540 266.0L550 265.8L560 265.6L570 265.5L580 265.3" stroke-width="1.68" stroke-opacity="0.82"/><path d="M200 279.6L210 279.1L220 278.6L230 278.1L240 277.6L250 277.0L260 276.3L270 275.6L280 274.8L290 274.3L300 274.0L310 273.9L320 273.8L330 273.7L340 273.6L350 273.3L360 273.1L370 273.0L380 272.8L390 272.7L400 272.5L410 272.4L420 272.3L430 272.1L440 271.9L450 271.6L460 271.3L470 270.9L480 270.5L490 270.2L500 270.0L510 269.7L520 269.5L530 269.5L540 269.6L550 269.7L560 269.9L570 269.9L580 269.7" stroke-width="1.19" stroke-opacity="0.53"/><path d="M200 290.9L210 290.2L220 289.5L230 288.9L240 288.2L250 287.5L260 286.8L270 286.2L280 285.7L290 285.3L300 284.9L310 284.4L320 283.7L330 283.1L340 282.4L350 281.9L360 281.6L370 281.5L380 281.4L390 281.4L400 281.4L410 281.3L420 281.1L430 280.8L440 280.6L450 280.6L460 280.5L470 280.4L480 280.0L490 279.5L500 278.9L510 278.4L520 278.1L530 278.0L540 277.9L550 278.0L560 278.2L570 278.4L580 278.5" stroke-width="0.94" stroke-opacity="0.44"/><path d="M200 299.3L210 298.0L220 296.7L230 295.7L240 295.0L250 294.7L260 294.6L270 294.4L280 293.9L290 293.3L300 292.8L310 292.4L320 292.2L330 291.9L340 291.4L350 290.8L360 290.1L370 289.5L380 288.9L390 288.4L400 287.8L410 287.1L420 286.4L430 286.0L440 285.8L450 285.8L460 285.9L470 285.9L480 285.6L490 285.0L500 284.4L510 283.8L520 283.5L530 283.4L540 283.4L550 283.5L560 283.4L570 283.4L580 283.4" stroke-width="0.93" stroke-opacity="0.60"/><path d="M200 307.3L210 306.6L220 305.9L230 305.1L240 304.3L250 303.5L260 302.7L270 302.0L280 301.5L290 301.3L300 301.2L310 301.0L320 300.5L330 299.7L340 299.0L350 298.3L360 297.5L370 296.7L380 295.8L390 295.2L400 295.0L410 295.1L420 295.2L430 295.2L440 294.7L450 294.1L460 293.5L470 292.9L480 292.5L490 292.0L500 291.5L510 291.0L520 290.5L530 290.0L540 289.7L550 289.8L560 290.2L570 290.7L580 291.3" stroke-width="1.07" stroke-opacity="0.56"/><path d="M200 314.8L210 313.8L220 312.7L230 311.6L240 310.6L250 309.9L260 309.4L270 308.9L280 308.4L290 307.9L300 307.3L310 306.8L320 306.2L330 305.7L340 305.4L350 305.0L360 304.5L370 303.9L380 303.0L390 302.2L400 301.5L410 301.0L420 300.8L430 300.6L440 300.4L450 300.2L460 299.8L470 299.4L480 299.0L490 298.7L500 298.5L510 298.4L520 298.4L530 298.4L540 298.3L550 298.0L560 297.5L570 297.1L580 296.8" stroke-width="1.42" stroke-opacity="0.84"/><path d="M200 320.1L210 319.5L220 318.8L230 317.9L240 317.1L250 316.4L260 315.5L270 314.2L280 312.7L290 311.4L300 310.5L310 309.9L320 309.6L330 309.3L340 308.8L350 308.1L360 307.5L370 306.9L380 306.6L390 306.4L400 306.3L410 306.2L420 306.1L430 305.9L440 305.4L450 304.8L460 304.0L470 303.1L480 302.5L490 302.0L500 301.7L510 301.4L520 301.2L530 301.0L540 300.8L550 300.7L560 300.6L570 300.5L580 300.5" stroke-width="1.54" stroke-opacity="0.50"/><path d="M200 326.9L210 326.1L220 325.3L230 324.6L240 324.0L250 323.5L260 322.9L270 322.3L280 321.4L290 320.5L300 319.4L310 318.2L320 317.0L330 316.0L340 315.1L350 314.3L360 313.6L370 312.9L380 312.3L390 311.8L400 311.5L410 311.3L420 311.2L430 310.8L440 310.1L450 309.1L460 308.2L470 307.5L480 307.0L490 306.5L500 306.0L510 305.6L520 305.5L530 305.7L540 306.1L550 306.4L560 306.4L570 306.2L580 305.9" stroke-width="1.51" stroke-opacity="0.55"/><path d="M200 332.2L210 331.1L220 330.3L230 329.7L240 329.3L250 328.8L260 328.3L270 327.6L280 326.7L290 325.6L300 324.5L310 323.2L320 322.2L330 321.3L340 320.6L350 320.0L360 319.2L370 318.3L380 317.3L390 316.4L400 315.6L410 314.9L420 314.4L430 313.9L440 313.4L450 312.9L460 312.5L470 312.4L480 312.5L490 312.7L500 312.7L510 312.5L520 312.1L530 311.7L540 311.3L550 310.7L560 310.0L570 309.3L580 309.0" stroke-width="1.22" stroke-opacity="0.49"/><path d="M200 343.4L210 342.5L220 341.3L230 339.8L240 338.2L250 336.7L260 335.4L270 334.4L280 333.5L290 332.5L300 331.4L310 330.1L320 329.0L330 328.0L340 327.2L350 326.6L360 325.9L370 325.3L380 324.9L390 324.7L400 324.6L410 324.5L420 323.9L430 323.0L440 321.8L450 320.7L460 319.8L470 319.4L480 319.1L490 318.7L500 318.3L510 317.9L520 317.4L530 317.0L540 316.4L550 315.9L560 315.4L570 315.2L580 315.2" stroke-width="1.25" stroke-opacity="0.75"/><path d="M200 352.1L210 351.1L220 350.0L230 348.9L240 347.7L250 346.5L260 345.5L270 344.7L280 344.1L290 343.6L300 342.9L310 342.2L320 341.2L330 340.2L340 339.0L350 337.7L360 336.4L370 335.1L380 333.9L390 332.9L400 331.9L410 331.1L420 330.4L430 329.8L440 329.4L450 329.0L460 328.5L470 327.9L480 327.4L490 327.1L500 327.0L510 327.1L520 327.2L530 327.2L540 327.0L550 326.6L560 326.1L570 325.5L580 325.0" stroke-width="1.28" stroke-opacity="0.71"/><path d="M200 363.9L210 363.2L220 362.2L230 360.9L240 359.3L250 357.7L260 356.2L270 354.7L280 353.0L290 351.2L300 349.5L310 348.3L320 347.7L330 347.4L340 347.0L350 346.1L360 344.9L370 343.5L380 342.2L390 341.1L400 340.2L410 339.8L420 339.6L430 339.6L440 339.5L450 339.0L460 338.2L470 337.0L480 335.7L490 334.7L500 333.8L510 333.1L520 332.8L530 333.0L540 333.6L550 333.9L560 333.5L570 332.4L580 331.1" stroke-width="1.33" stroke-opacity="0.61"/><path d="M200 375.0L210 373.8L220 372.4L230 370.9L240 369.5L250 368.1L260 366.6L270 364.8L280 362.9L290 361.1L300 359.4L310 357.9L320 356.7L330 355.7L340 354.8L350 354.1L360 353.5L370 352.8L380 351.9L390 350.8L400 349.7L410 348.7L420 347.9L430 347.1L440 346.3L450 345.4L460 344.4L470 343.4L480 342.5L490 341.8L500 341.3L510 341.0L520 341.0L530 341.0L540 341.1L550 341.0L560 340.7L570 340.3L580 339.7" stroke-width="1.15" stroke-opacity="0.73"/><path d="M200 379.6L210 378.3L220 376.8L230 375.2L240 373.5L250 371.6L260 369.7L270 367.8L280 366.0L290 364.6L300 363.4L310 362.4L320 361.5L330 360.6L340 359.5L350 358.3L360 357.1L370 356.0L380 355.1L390 354.5L400 353.8L410 353.0L420 352.1L430 351.1L440 350.1L450 349.2L460 348.6L470 348.4L480 348.5L490 348.9L500 349.0L510 348.6L520 347.6L530 346.1L540 344.6L550 343.3L560 342.5L570 342.3L580 342.7" stroke-width="0.99" stroke-opacity="0.42"/><path d="M200 389.2L210 387.7L220 386.3L230 384.6L240 382.7L250 380.5L260 378.5L270 376.8L280 375.5L290 374.5L300 373.6L310 372.7L320 371.6L330 370.1L340 368.4L350 366.4L360 364.5L370 362.9L380 361.7L390 361.0L400 360.7L410 360.5L420 360.3L430 360.1L440 360.0L450 359.7L460 359.0L470 357.9L480 356.6L490 355.3L500 354.3L510 353.6L520 353.1L530 352.6L540 351.8L550 351.1L560 350.5L570 350.3L580 350.4" stroke-width="1.55" stroke-opacity="0.50"/><path d="M200 399.8L210 397.9L220 396.0L230 394.0L240 392.0L250 390.0L260 388.2L270 386.6L280 385.3L290 383.9L300 382.3L310 380.7L320 379.2L330 377.9L340 376.7L350 375.5L360 374.2L370 373.0L380 371.9L390 370.9L400 370.1L410 369.3L420 368.4L430 367.4L440 366.3L450 365.2L460 363.9L470 362.5L480 361.1L490 359.9L500 359.2L510 358.8L520 358.9L530 359.0L540 359.0L550 358.9L560 358.6L570 358.3L580 357.9" stroke-width="1.36" stroke-opacity="0.53"/><path d="M200 407.4L210 405.5L220 403.6L230 401.6L240 399.5L250 397.3L260 395.3L270 393.6L280 392.2L290 391.0L300 389.7L310 388.1L320 386.5L330 384.9L340 383.7L350 383.0L360 382.7L370 382.5L380 382.0L390 381.1L400 379.7L410 378.3L420 376.9L430 375.8L440 375.0L450 374.5L460 374.3L470 374.1L480 373.6L490 372.6L500 371.4L510 370.1L520 369.0L530 368.1L540 367.2L550 366.5L560 366.1L570 366.0L580 366.0" stroke-width="1.63" stroke-opacity="0.77"/><path d="M200 413.0L210 410.2L220 407.5L230 405.0L240 402.8L250 401.1L260 399.8L270 399.1L280 398.6L290 397.8L300 396.6L310 394.8L320 392.9L330 391.1L340 389.7L350 388.8L360 388.1L370 387.4L380 386.7L390 386.0L400 385.1L410 384.2L420 383.2L430 382.0L440 380.9L450 379.7L460 378.6L470 377.7L480 376.9L490 376.3L500 375.6L510 375.0L520 374.6L530 374.4L540 374.5L550 374.7L560 374.9L570 375.0L580 374.9" stroke-width="1.07" stroke-opacity="0.76"/><path d="M200 418.0L210 415.9L220 413.9L230 412.2L240 410.9L250 409.7L260 408.6L270 407.3L280 405.7L290 403.9L300 401.9L310 399.9L320 398.2L330 396.7L340 395.2L350 393.5L360 391.9L370 390.5L380 389.4L390 388.5L400 387.8L410 387.2L420 386.5L430 385.5L440 384.3L450 382.8L460 381.5L470 380.6L480 380.2L490 380.0L500 380.0L510 379.9L520 379.5L530 379.0L540 378.4L550 377.9L560 377.4L570 377.0L580 377.0" stroke-width="0.91" stroke-opacity="0.48"/><path d="M200 425.8L210 423.5L220 421.6L230 420.1L240 418.8L250 417.4L260 415.9L270 414.5L280 413.3L290 412.1L300 410.9L310 409.4L320 407.9L330 406.4L340 404.6L350 402.4L360 400.0L370 398.0L380 396.7L390 396.1L400 395.8L410 395.5L420 395.0L430 394.4L440 393.8L450 393.3L460 393.1L470 392.7L480 392.1L490 391.0L500 389.6L510 388.3L520 387.6L530 387.8L540 388.3L550 388.5L560 388.1L570 387.3L580 386.7" stroke-width="0.99" stroke-opacity="0.79"/><path d="M200 434.2L210 432.3L220 430.6L230 429.1L240 427.4L250 425.5L260 423.4L270 421.3L280 419.4L290 417.7L300 416.2L310 414.7L320 413.3L330 411.7L340 410.1L350 408.5L360 407.1L370 406.0L380 405.2L390 404.6L400 404.1L410 403.7L420 403.3L430 402.8L440 402.3L450 401.5L460 400.7L470 399.7L480 398.9L490 398.3L500 398.0L510 397.7L520 397.5L530 397.1L540 396.5L550 395.7L560 394.7L570 393.9L580 393.5" stroke-width="1.40" stroke-opacity="0.74"/><path d="M200 436.1L210 433.8L220 432.2L230 431.3L240 430.7L250 429.9L260 428.5L270 426.7L280 424.9L290 423.2L300 421.6L310 420.1L320 418.7L330 417.2L340 415.8L350 414.4L360 413.0L370 411.8L380 410.6L390 409.6L400 408.9L410 408.3L420 407.9L430 407.4L440 406.7L450 406.0L460 405.4L470 405.1L480 404.9L490 404.4L500 403.4L510 401.9L520 400.3L530 398.9L540 398.0L550 397.8L560 398.1L570 398.8L580 399.5" stroke-width="1.72" stroke-opacity="0.73"/><path d="M200 440.1L210 438.2L220 436.7L230 435.6L240 434.6L250 433.4L260 432.0L270 430.4L280 428.8L290 427.3L300 425.9L310 424.6L320 423.1L330 421.4L340 419.6L350 417.8L360 416.3L370 415.0L380 413.8L390 412.9L400 412.1L410 411.5L420 410.9L430 410.0L440 408.8L450 407.6L460 406.6L470 405.8L480 405.1L490 404.5L500 404.1L510 404.2L520 404.6L530 404.9L540 405.1L550 404.9L560 404.6L570 404.1L580 403.5" stroke-width="1.45" stroke-opacity="0.78"/><path d="M200 448.5L210 447.1L220 445.7L230 444.3L240 442.7L250 441.1L260 439.3L270 437.6L280 435.9L290 434.5L300 433.4L310 432.1L320 430.5L330 428.5L340 426.5L350 424.8L360 423.5L370 422.8L380 422.3L390 422.0L400 421.7L410 421.2L420 420.6L430 419.9L440 419.4L450 418.9L460 418.3L470 417.3L480 416.1L490 414.9L500 414.0L510 413.4L520 413.1L530 412.8L540 412.3L550 411.5L560 410.5L570 409.4L580 408.4" stroke-width="0.94" stroke-opacity="0.54"/></g></g><ellipse cx="387.50" cy="230.68" rx="164.50" ry="179.17" transform="rotate(12.88 387.50 230.68)" fill="#000" filter="url(#spk)" opacity="1"/>
</svg>

<!-- ===== toolbar ===== -->
<div class="a" style="left:0;top:0;width:600px;height:37px;background:#f1f1f1;border-bottom:1px solid #dcdcdc"></div>
<div class="a" style="left:-4px;top:-4px;width:56.5px;height:35.6px;border:1px solid #dedede;border-radius:3px"></div>
<div class="u" style="left:10.3px;top:12.4px;font-size:6.4px;color:#333;-webkit-text-stroke:.2px #333;transform:scaleX(.82)">RENDU</div>
<svg class="a" style="left:32px;top:14px" width="3" height="2"><path d="M0 0H3L1.5 2Z" fill="#444"/></svg>
<div class="a" style="left:61.2px;top:4.3px;width:31.9px;height:1.7px;background:#1a8fdb;border-radius:1px"></div>
<div class="a" style="left:68px;top:-0.5px;width:18px;height:1.5px;background:repeating-linear-gradient(90deg,#3a98de 0 2.4px,#9fcdf0 2.4px 3.2px);opacity:.75"></div>
<div class="a" style="left:153px;top:7px;width:1px;height:29px;background:#dedede"></div>
<div class="a" style="left:245px;top:7px;width:1px;height:29px;background:#dedede"></div>

<!-- icons group 1 -->
<svg class="a" style="left:56px;top:5px" width="96" height="22" viewBox="56 5 96 22">
  <!-- color wheel -->
  <g transform="translate(69.3 15.8)"><path d="M0 0L4.15 -7.19A8.3 8.3 0 0 1 8.30 0.00Z" fill="#f28a30"/><path d="M0 0L8.30 0.00A8.3 8.3 0 0 1 4.15 7.19Z" fill="#e05a55"/><path d="M0 0L4.15 7.19A8.3 8.3 0 0 1 -4.15 7.19Z" fill="#7d52e0"/><path d="M0 0L-4.15 7.19A8.3 8.3 0 0 1 -8.30 0.00Z" fill="#23b0c6"/><path d="M0 0L-8.30 0.00A8.3 8.3 0 0 1 -4.15 -7.19Z" fill="#4fbe6c"/><path d="M0 0L-4.15 -7.19A8.3 8.3 0 0 1 4.15 -7.19Z" fill="#f6b73c"/></g>
  <!-- scene cube -->
  <defs><radialGradient id="sph2" cx=".45" cy=".4" r=".65"><stop offset="0" stop-color="#ffffff"/><stop offset=".55" stop-color="#e6e6e6"/><stop offset="1" stop-color="#a8a8a8"/></radialGradient>
  <linearGradient id="lp" x1="0" y1="0" x2="1" y2="0"><stop offset="0" stop-color="#a9a9a9"/><stop offset="1" stop-color="#d8d8d8"/></linearGradient></defs>
  <rect x="88.6" y="8.2" width="12.4" height="12.9" fill="#e2e2e2" stroke="#8c8c8c" stroke-width=".8"/>
  <path d="M85 11.6L88.6 8.2V21.1L85 23.6Z" fill="url(#lp)" stroke="#8c8c8c" stroke-width=".7"/>
  <path d="M85 23.6L88.6 21.1H101L97.4 23.6Z" fill="#efefef" stroke="#9a9a9a" stroke-width=".6"/>
  <circle cx="93" cy="16.7" r="4.3" fill="url(#sph2)" stroke="#9a9a9a" stroke-width=".5"/>
  <!-- decal -->
  <rect x="114" y="14.5" width="11" height="10" rx="1.2" fill="#dcdcdc" stroke="#8c8c8c" stroke-width=".7"/>
  <rect x="107" y="7" width="11.8" height="11.8" fill="#73c1f1"/>
  <path d="M107 18.8V14.3L110 12.3L113 15L115 13.8L118.8 16.2V18.8Z" fill="#3d93d4"/>
  <circle cx="115.2" cy="10.6" r="1.2" fill="#f7c89a"/>
  <path d="M108.5 19.5V22.3H112" stroke="#444" stroke-width=".7" fill="none"/>
  <circle cx="112.3" cy="22.3" r=".8" fill="#333"/>
  <!-- texture map -->
  <path d="M132.2 16L136.5 11.5L140.5 14.5V18.5L136.5 21Z" fill="#f6f6f6" stroke="#7a7a7a" stroke-width=".8"/>
  <path d="M140.3 12.3L146 7.6V20.3L140.3 24.6Z" fill="#5aa6e0"/>
</svg>
<div class="a" style="left:56px;top:27px;width:96px;height:9px;background:#1192da"></div>
<div class="u" style="left:79px;top:28.9px;color:#e6f3fb;transform:scaleX(.875)">CONFIGURATION</div>
<svg class="a" style="left:125px;top:30.8px" width="3" height="2"><path d="M0 0H3L1.5 2Z" fill="#fff"/></svg>

<!-- icons group 2 -->
<svg class="a" style="left:160px;top:4px" width="120" height="24" viewBox="160 4 120 24">
  <defs>
    <radialGradient id="sph" cx=".52" cy=".36" r=".7" fx=".55" fy=".3"><stop offset="0" stop-color="#ffffff"/><stop offset=".25" stop-color="#f4f4f4"/><stop offset=".62" stop-color="#a4a4a4"/><stop offset=".88" stop-color="#8c8c8c"/><stop offset="1" stop-color="#b4b4b4"/></radialGradient>
  </defs>
  <circle cx="174.7" cy="14" r="7.3" fill="url(#sph)"/>
  <circle cx="181" cy="20.7" r="4.1" fill="#22b14c"/>
  <path d="M179.3 18.2L183.2 20.7L179.3 23.2Z" fill="#fff"/>
  <circle cx="198.7" cy="14" r="7.3" fill="url(#sph)"/>
  <rect x="200.8" y="15.3" width="7" height="9.4" fill="#f2f2f2" stroke="#7c7c7c" stroke-width=".8"/>
  <rect x="202" y="16.6" width="4.6" height="2.4" fill="#2b8fd8"/>
  <path d="M202.2 20.5H206.2M202.2 22.2H206.2" stroke="#8a8a8a" stroke-width=".6"/>
  <rect x="214.4" y="7.9" width="16.2" height="16" rx=".8" fill="#7cc4f6"/>
  <path d="M214.4 23.9V17.2C215.5 15.3 217 14.3 218.4 14.3C219.8 14.3 221.3 15.3 222.4 17V23.9Z" fill="#3a90d6"/>
  <circle cx="226" cy="12.3" r="1.6" fill="#fbefd6"/>
  <rect x="223.2" y="16.8" width="7.9" height="7.7" rx="1.2" fill="#2e2e2e"/>
  <path d="M225.3 17.6V19.9H229.1V17.6" fill="none" stroke="#d8d8d8" stroke-width=".9"/>
  <rect x="225.2" y="21.6" width="4" height="2.3" fill="#d0d0d0"/>
  <rect x="226.3" y="22.3" width="1.8" height="1.6" fill="#444"/>
  <!-- teapot -->
  <path d="M257.6 14.6C259 13.2 261.2 12.4 263.7 12.4C266.3 12.4 268.4 13.2 269.6 14.6C269.4 17.6 268.2 20 266.6 21.4H260.8C259 20 257.6 17.6 257.6 14.6Z" fill="#f7f7f7" stroke="#5a5a5a" stroke-width=".85"/>
  <path d="M269.4 14.2C271.2 13.1 272.8 13.9 272.2 15.8C271.7 17.4 270.3 18.6 268.9 19" fill="none" stroke="#5a5a5a" stroke-width=".85"/>
  <path d="M257.9 15.6L255.1 12.9L256.2 17.4L258.3 18.6" fill="none" stroke="#5a5a5a" stroke-width=".8" stroke-linejoin="round"/>
  <circle cx="263.7" cy="11.7" r="1" fill="#4a4a4a"/>
</svg>
<div class="u" style="left:161.7px;top:28.7px;color:#404040;transform:scaleX(.92)">RENDU DANS LE CANEVAS</div>
<svg class="a" style="left:236.2px;top:30.6px" width="3" height="2"><path d="M0 0H3L1.5 2Z" fill="#444"/></svg>
<div class="u" style="left:252.3px;top:28.7px;color:#404040;transform:scaleX(.87)">RENDU</div>
<svg class="a" style="left:273px;top:30.6px" width="3" height="2"><path d="M0 0H3L1.5 2Z" fill="#444"/></svg>

<!-- ===== navigator ===== -->
<div class="a" style="left:0;top:39px;width:150px;height:13.5px;background:#f0f0f0"></div>
<div class="u" style="left:2px;top:43.3px;color:#5a5a5a;transform:scaleX(.92)">NAVIGATEUR</div>

<!-- row1 -->
<svg class="a" style="left:0;top:57px" width="5" height="8"><path d="M3.6 1.3V6.3H-0.5Z" fill="#9a9a9a" stroke="#444" stroke-width="1.2" stroke-linejoin="round"/></svg>
<div class="row" style="left:7.8px;top:56px;width:60px"></div>
<svg class="a" style="left:9px;top:58px" width="10" height="7" viewBox="0 0 10 7"><path d="M0.8 3.5Q5 -0.8 9.2 3.5Q5 7.8 0.8 3.5Z" fill="none" stroke="#7c7c7c" stroke-width="1"/><circle cx="5" cy="3.5" r="1.4" fill="none" stroke="#7c7c7c" stroke-width="1"/></svg>
<div class="a" style="left:21.5px;top:56.8px;width:40px;height:8.6px;background:#969696;border-left:2.5px solid #707070"></div>
<div class="a" style="left:24px;top:57.3px;width:7.2px;height:7.8px;background:linear-gradient(#f8f8f8,#e4e8ee);border:0.8px solid #c8c8c8;border-radius:1.5px"></div>
<div class="t" style="left:39.1px;top:58.6px;color:#eef2f8;font-weight:bold">(Non enregistré)</div>

<!-- row2 -->
<svg class="a" style="left:8px;top:71px" width="7" height="8"><path d="M0.7 0.6L5.4 3.8L0.7 7Z" fill="none" stroke="#4a4a4a" stroke-width="1.1" stroke-linejoin="round"/></svg>
<div class="row" style="left:17.9px;top:69px;width:50px"></div>
<svg class="a" style="left:19px;top:69.3px" width="10" height="10" viewBox="0 0 10 10"><circle cx="5" cy="5" r="2.3" fill="none" stroke="#7e7e7e" stroke-width="1.9"/><path d="M7.40 5.99L8.97 6.65M5.99 7.40L6.65 8.97M4.01 7.40L3.35 8.97M2.60 5.99L1.03 6.65M2.60 4.01L1.03 3.35M4.01 2.60L3.35 1.03M5.99 2.60L6.65 1.03M7.40 4.01L8.97 3.35" stroke="#7e7e7e" stroke-width="1.5"/></svg>
<div class="n" style="left:35.7px;top:70.8px">Paramètres du document</div>

<!-- row3 -->
<svg class="a" style="left:8px;top:84px" width="7" height="8"><path d="M0.7 0.6L5.4 3.8L0.7 7Z" fill="none" stroke="#4a4a4a" stroke-width="1.1" stroke-linejoin="round"/></svg>
<div class="row" style="left:17.9px;top:82px;width:50px"></div>
<svg class="a" style="left:19.5px;top:83.5px" width="9" height="7" viewBox="0 0 9 7"><path d="M0 0.3H3.5L4.3 1.2H9V6.8H0Z" fill="#8c8c8c"/><path d="M0.5 1.6H8.5" stroke="#b8b8b8" stroke-width=".5"/></svg>
<div class="n" style="left:36px;top:83.8px">Vues enregistrées</div>

<!-- row Origine -->
<svg class="a" style="left:8px;top:97px" width="7" height="8"><path d="M0.7 0.6L5.4 3.8L0.7 7Z" fill="none" stroke="#4a4a4a" stroke-width="1.1" stroke-linejoin="round"/></svg>
<div class="row" style="left:17.9px;top:95px;width:56px"></div>
<svg class="a" style="left:19.5px;top:97px" width="10" height="7" viewBox="0 0 10 7"><path d="M0.8 3.5Q5 -0.8 9.2 3.5Q5 7.8 0.8 3.5Z" fill="none" stroke="#bdbdbd" stroke-width="1"/><circle cx="5" cy="3.5" r="1.4" fill="none" stroke="#bdbdbd" stroke-width="1"/><path d="M3 6.8L7 0.2" stroke="#c8c8c8" stroke-width=".7"/></svg>
<svg class="a" style="left:33px;top:96.8px" width="9" height="7" viewBox="0 0 9 7"><path d="M0 0.3H3.5L4.3 1.2H9V6.8H0Z" fill="#8c8c8c"/></svg>
<div class="n" style="left:49.4px;top:96.8px">Origine</div>

<!-- row Corps -->
<svg class="a" style="left:8px;top:110px" width="7" height="8"><path d="M0.7 0.6L5.4 3.8L0.7 7Z" fill="none" stroke="#4a4a4a" stroke-width="1.1" stroke-linejoin="round"/></svg>
<div class="row" style="left:17.9px;top:108px;width:54px"></div>
<svg class="a" style="left:19.5px;top:110px" width="10" height="7" viewBox="0 0 10 7"><path d="M0.8 3.5Q5 -0.8 9.2 3.5Q5 7.8 0.8 3.5Z" fill="none" stroke="#7c7c7c" stroke-width="1"/><circle cx="5" cy="3.5" r="1.4" fill="none" stroke="#7c7c7c" stroke-width="1"/></svg>
<svg class="a" style="left:33px;top:109.8px" width="9" height="7" viewBox="0 0 9 7"><path d="M0 0.3H3.5L4.3 1.2H9V6.8H0Z" fill="#8c8c8c"/></svg>
<div class="n" style="left:49.4px;top:109.8px">Corps</div>

<!-- row Esquisses -->
<svg class="a" style="left:7px;top:122.8px" width="8" height="8"><path d="M6.8 0.5V6.8H0.3Z" fill="none" stroke="#3c3c3c" stroke-width="1"/><path d="M6.8 3V6.8H3Z" fill="#3c3c3c"/></svg>
<div class="row" style="left:17.9px;top:121px;width:64.5px"></div>
<svg class="a" style="left:19.5px;top:123.2px" width="10" height="7" viewBox="0 0 10 7"><path d="M0.8 3.5Q5 -0.8 9.2 3.5Q5 7.8 0.8 3.5Z" fill="none" stroke="#bdbdbd" stroke-width="1"/><circle cx="5" cy="3.5" r="1.4" fill="none" stroke="#bdbdbd" stroke-width="1"/><path d="M3 6.8L7 0.2" stroke="#c8c8c8" stroke-width=".7"/></svg>
<svg class="a" style="left:33px;top:123px" width="9" height="7" viewBox="0 0 9 7"><path d="M0 0.3H3.5L4.3 1.2H9V6.8H0Z" fill="#8c8c8c"/></svg>
<div class="n" style="left:49.4px;top:122.8px">Esquisses</div>

<!-- Esquisse1 -->
<div class="row" style="left:27.7px;top:134px;width:62.3px"></div>
<svg class="a" style="left:29.8px;top:136.3px" width="9" height="6" viewBox="0 0 9 6"><path d="M0.4 3Q4.5 -0.7 8.6 3Q4.5 6.7 0.4 3Z" fill="none" stroke="#cdcdcd" stroke-width=".9"/><circle cx="4.5" cy="3" r="1.2" fill="none" stroke="#cdcdcd" stroke-width=".8"/></svg>
<svg class="a" style="left:42px;top:134.5px" width="10" height="10" viewBox="0 0 10 10"><path d="M1 1H7.5V5M1 1V8.5H4.5" fill="none" stroke="#555" stroke-width=".6" stroke-dasharray="1.2 .6"/><g fill="#2a8ee0"><rect x=".4" y=".4" width="1.2" height="1.2"/><rect x="6.9" y=".4" width="1.2" height="1.2"/><rect x=".4" y="7.9" width="1.2" height="1.2"/></g><path d="M5 9L8.8 4.8" stroke="#f0a030" stroke-width="1.4"/></svg>
<div class="n" style="left:58.9px;top:135.8px">Esquisse1</div>

<!-- Esquisse3 -->
<div class="row" style="left:27.7px;top:147px;width:64.2px"></div>
<svg class="a" style="left:29.8px;top:149.4px" width="9" height="6" viewBox="0 0 9 6"><path d="M0.4 3Q4.5 -0.7 8.6 3Q4.5 6.7 0.4 3Z" fill="none" stroke="#cdcdcd" stroke-width=".9"/><circle cx="4.5" cy="3" r="1.2" fill="none" stroke="#cdcdcd" stroke-width=".8"/></svg>
<svg class="a" style="left:42px;top:147.6px" width="10" height="10" viewBox="0 0 10 10"><path d="M1 1H7.5V5M1 1V8.5H4.5" fill="none" stroke="#555" stroke-width=".6" stroke-dasharray="1.2 .6"/><g fill="#2a8ee0"><rect x=".4" y=".4" width="1.2" height="1.2"/><rect x="6.9" y=".4" width="1.2" height="1.2"/><rect x=".4" y="7.9" width="1.2" height="1.2"/></g><path d="M5 9L8.8 4.8" stroke="#f0a030" stroke-width="1.4"/></svg>
<div class="n" style="left:58.9px;top:148.8px">Esquisse3</div>

<!-- ===== dropdown ===== -->
<div class="a" style="left:56px;top:36px;width:158.6px;height:62.4px;background:#fff;border-left:1px solid #cfcfcf;border-top:1px solid #d0d0d0;box-shadow:1px 0.5px 1px rgba(0,0,0,.22)"></div>
<svg class="a" style="left:58px;top:38px" width="12" height="60" viewBox="58 38 12 60">
  <!-- matiere physique -->
  <circle cx="63.9" cy="43.3" r="3.9" fill="#f4f4f4" stroke="#4a4a4a" stroke-width="1"/>
  <path d="M61.2 40.6L66.6 46M66.6 40.6L61.2 46" stroke="#4a4a4a" stroke-width="1.2"/>
  <circle cx="63.9" cy="43.3" r="1.1" fill="#4a4a4a"/>
  <!-- wheel -->
  <g transform="translate(63.9 55.1)"><path d="M0 0L2.15 -3.72A4.3 4.3 0 0 1 4.30 0.00Z" fill="#f28a30"/><path d="M0 0L4.30 0.00A4.3 4.3 0 0 1 2.15 3.72Z" fill="#e05a55"/><path d="M0 0L2.15 3.72A4.3 4.3 0 0 1 -2.15 3.72Z" fill="#7d52e0"/><path d="M0 0L-2.15 3.72A4.3 4.3 0 0 1 -4.30 0.00Z" fill="#23b0c6"/><path d="M0 0L-4.30 0.00A4.3 4.3 0 0 1 -2.15 -3.72Z" fill="#4fbe6c"/><path d="M0 0L-2.15 -3.72A4.3 4.3 0 0 1 2.15 -3.72Z" fill="#f6b73c"/></g>
  <!-- scene -->
  <path d="M61.6 63.4H68.2V69.6L66.4 71.4H59.8V65.2Z" fill="#dedede" stroke="#6e6e6e" stroke-width=".8"/>
  <circle cx="64" cy="67.4" r="2.1" fill="#f4f4f4" stroke="#9a9a9a" stroke-width=".6"/>
  <!-- decal -->
  <rect x="61.3" y="78.2" width="6.8" height="5" rx=".8" fill="#dcdcdc" stroke="#8c8c8c" stroke-width=".5"/>
  <rect x="59.6" y="74.8" width="5.6" height="5.4" fill="#3b95db"/>
  <rect x="60.4" y="75.6" width="2.2" height="1.6" fill="#9fd3f5"/>
  <!-- texture -->
  <path d="M60 91.2L62.5 88.8L64.7 90.3V92.3L62.5 93.7Z" fill="#f4f4f4" stroke="#7a7a7a" stroke-width=".6"/>
  <path d="M64.4 89L67.4 86.8V93.4L64.4 95.5Z" fill="#4a9fe0"/>
</svg>
<div class="t" style="left:70px;top:41.7px">Matière physique</div>
<div class="t" style="left:70px;top:53.7px">Apparence</div>
<div class="t" style="left:182px;top:53.7px">A</div>
<div class="t" style="left:70px;top:66px">Paramètres de la scène</div>
<div class="t" style="left:70px;top:78px">Décalcomanie</div>
<div class="t" style="left:70px;top:90px">Contrôles de correspondance de texture</div>
<div class="t" style="left:182px;top:90px">Ctrl+A</div>

<!-- ===== bottom ===== -->
<div class="a" style="left:0;top:424.6px;width:151px;height:13.5px;background:#f1f1f1"></div>
<div class="u" style="left:2px;top:428.3px;color:#5a5a5a;transform:scaleX(.885)">COMMENTAIRES</div>
<svg class="a" style="left:139px;top:428px" width="12" height="8" viewBox="139 428 12 8"><circle cx="142.3" cy="431.3" r="2.7" fill="#333"/><path d="M140.9 431.3H143.7M142.3 429.9V432.7" stroke="#fff" stroke-width=".8"/><path d="M148.8 429.5Q150 431.3 148.8 433" stroke="#aaa" stroke-width=".8" fill="none"/></svg>
<div class="a" style="left:0;top:440.6px;width:600px;height:10px;background:#f2f2f2"></div>
<div class="u" style="left:0;top:443.9px;color:#555;transform:scaleX(.875)">GALERIE DE RENDUS</div>

<!-- nav bar -->
<div class="a" style="left:345.5px;top:424.5px;width:112px;height:13.5px;background:#f2f2f2;border:0.5px solid #e4e4e4"></div>
<svg class="a" style="left:345px;top:424px" width="114" height="15" viewBox="345 424 114 15">
  <!-- orbit -->
  <path d="M352.1 427.3V435.8" stroke="#8a8a8a" stroke-width="1.3"/>
  <path d="M350.6 428.6L352.1 427.2L353.6 428.6" fill="none" stroke="#8a8a8a" stroke-width=".8"/>
  <ellipse cx="351.5" cy="432.6" rx="4.3" ry="1.6" fill="none" stroke="#555" stroke-width=".9"/>
  <path d="M347 432.2L348.6 434.6L349.6 432.6Z" fill="#222"/>
  <path d="M358.9 430.6H362.1L360.5 432.6Z" fill="#333"/>
  <!-- look at -->
  <path d="M365.6 430.2H374.2V435.5H365.6Z" fill="#c9c9c9" stroke="#777" stroke-width=".8"/>
  <path d="M365.8 430.2L366.8 428H368.6L369.2 430.2M370.6 430.2L371.2 428H373L374 430.2" fill="#d6d6d6" stroke="#777" stroke-width=".7"/>
  <rect x="367" y="431.6" width="5.8" height="2.6" fill="#8ea4bc"/>
  <!-- hand -->
  <g fill="#f6f6f6" stroke="#666" stroke-width=".7">
  <path d="M380.3 429.2V432.5M381.9 428.1V431.5M383.5 427.8V431.5M385.1 428.3V431.8" stroke-width="1.9" stroke="#666" stroke-linecap="round"/>
  <path d="M380.3 429.2V432.5M381.9 428.1V431.5M383.5 427.8V431.5M385.1 428.3V431.8" stroke-width=".6" stroke="#f6f6f6" stroke-linecap="round"/>
  <path d="M379.6 431.8H385.8L386.9 430.2L387.6 430.6L386.4 434.2L385.2 435.6H381.2L379.6 433.6Z"/>
  </g>
  <!-- zoom+ -->
  <circle cx="396" cy="431.2" r="2.7" fill="#e4eef8" stroke="#5a5a5a" stroke-width=".9"/>
  <path d="M397.9 433.2L400.4 435.6" stroke="#2a2a2a" stroke-width="1.3"/>
  <path d="M400.4 427.4V429.6M399.3 428.5H401.5" stroke="#777" stroke-width=".6"/>
  <!-- zoom window -->
  <path d="M407 427.2H409M413.6 427.2H416M407 427.2V429M416 427.2V429M407 433.5V435.8H409M411.5 435.8H413" stroke="#aaa" stroke-width=".5" fill="none"/>
  <circle cx="410.8" cy="431.1" r="3.3" fill="#e4eef8" stroke="#5a5a5a" stroke-width=".9"/>
  <path d="M413.2 433.5L415.8 436" stroke="#2a2a2a" stroke-width="1.4"/>
  <path d="M419.4 430.6H422.6L421 432.6Z" fill="#333"/>
  <!-- display -->
  <rect x="425.3" y="427.7" width="8.8" height="5.9" fill="#7fb5e3" stroke="#6f7f90" stroke-width=".7"/>
  <path d="M426.5 432.5L430 429.3L433 431.6" stroke="#a8d0f0" stroke-width=".7" fill="none"/>
  <rect x="428.2" y="433.6" width="3.2" height="1.4" fill="#777"/>
  <rect x="427.3" y="434.9" width="5" height=".9" fill="#888"/>
  <path d="M435.4 430.6H438.6L437 432.6Z" fill="#333"/>
  <!-- grid -->
  <defs><linearGradient id="gridg" x1="0" y1="0" x2="0" y2="1"><stop offset="0" stop-color="#8a8a8a"/><stop offset="1" stop-color="#a9b8cc"/></linearGradient></defs>
  <rect x="442.2" y="427.4" width="9" height="8.5" fill="url(#gridg)" stroke="#787878" stroke-width=".6"/>
  <path d="M445.2 427.4V435.9M448.2 427.4V435.9M442.2 431.6H451.2" stroke="#c4ccd8" stroke-width=".45"/>
  <path d="M452.1 430.6H455.3L453.7 432.6Z" fill="#333"/>
</svg>
</body></html>
